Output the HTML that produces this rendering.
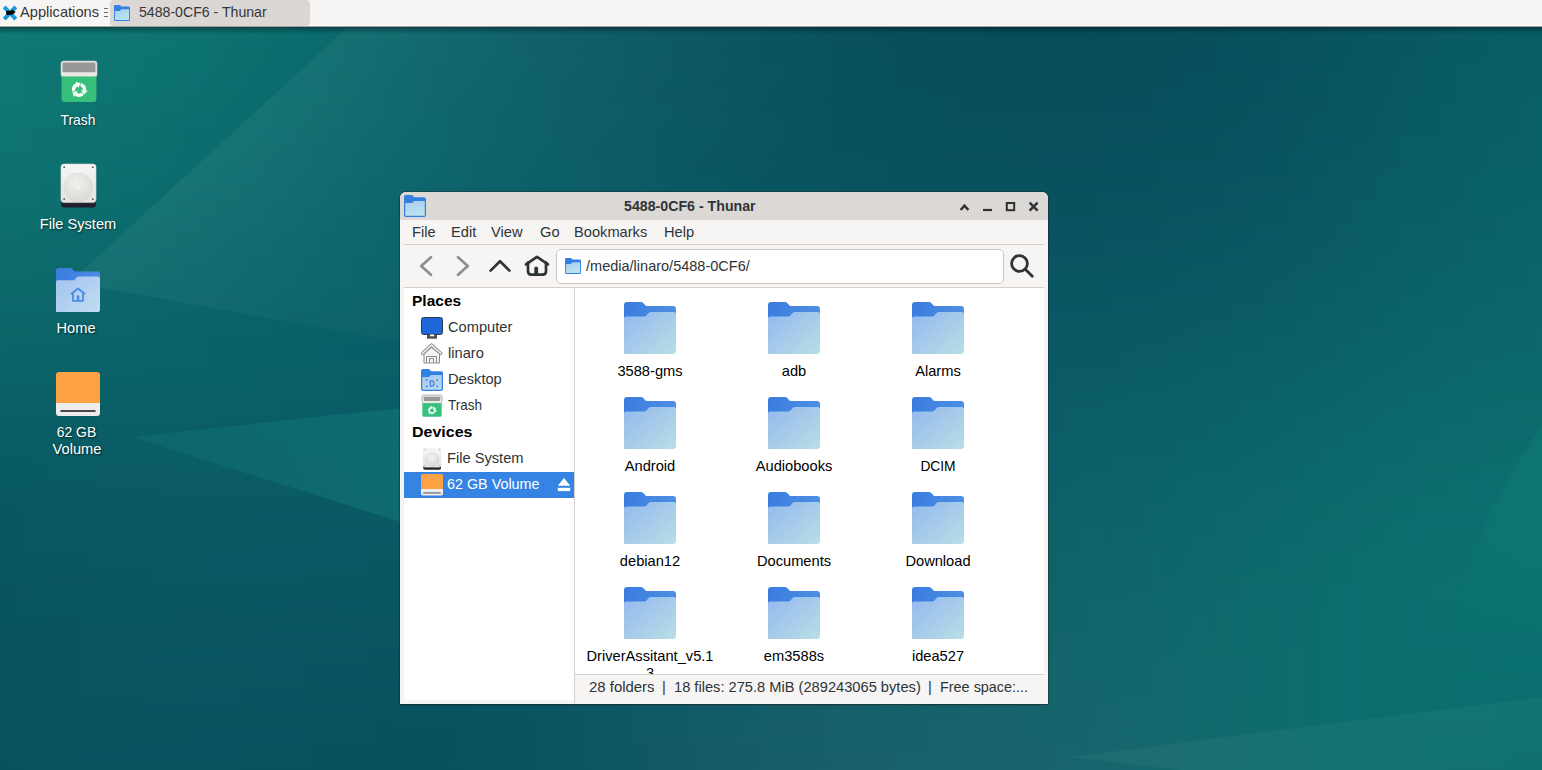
<!DOCTYPE html>
<html><head><meta charset="utf-8"><title>Thunar</title>
<style>
html,body{margin:0;padding:0;width:1542px;height:770px;overflow:hidden;}
body{position:relative;font-family:"Liberation Sans",sans-serif;background:#0b5e66;}
.t{position:absolute;white-space:nowrap;}
.a{position:absolute;}
svg{position:absolute;overflow:visible;}
</style></head><body>
<svg class="a" style="left:0;top:0" width="1542" height="770" viewBox="0 0 1542 770"><defs><linearGradient id="r0" x1="0" y1="0" x2="1" y2="0"><stop offset="0.0000" stop-color="#0f7873"/><stop offset="0.0415" stop-color="#0f7773"/><stop offset="0.0830" stop-color="#0e7672"/><stop offset="0.1245" stop-color="#0d7471"/><stop offset="0.1660" stop-color="#0c716f"/><stop offset="0.2075" stop-color="#0a6c6d"/><stop offset="0.2490" stop-color="#09666a"/><stop offset="0.2905" stop-color="#086167"/><stop offset="0.3320" stop-color="#085c65"/><stop offset="0.3735" stop-color="#075963"/><stop offset="0.4150" stop-color="#075662"/><stop offset="0.4565" stop-color="#075460"/><stop offset="0.4981" stop-color="#07515e"/><stop offset="0.5396" stop-color="#064f5d"/><stop offset="0.5811" stop-color="#064e5b"/><stop offset="0.6226" stop-color="#064c5a"/><stop offset="0.6641" stop-color="#064c5a"/><stop offset="0.7056" stop-color="#064c5a"/><stop offset="0.7471" stop-color="#064c5b"/><stop offset="0.7886" stop-color="#064e5d"/><stop offset="0.8301" stop-color="#07515e"/><stop offset="0.8716" stop-color="#075460"/><stop offset="0.9131" stop-color="#075762"/><stop offset="0.9546" stop-color="#085a63"/><stop offset="0.9961" stop-color="#085c64"/></linearGradient><linearGradient id="r1" x1="0" y1="0" x2="1" y2="0"><stop offset="0.0000" stop-color="#0f7873"/><stop offset="0.0415" stop-color="#0f7773"/><stop offset="0.0830" stop-color="#0e7672"/><stop offset="0.1245" stop-color="#0d7471"/><stop offset="0.1660" stop-color="#0c706f"/><stop offset="0.2075" stop-color="#0a6c6d"/><stop offset="0.2490" stop-color="#09666a"/><stop offset="0.2905" stop-color="#086167"/><stop offset="0.3320" stop-color="#085c65"/><stop offset="0.3735" stop-color="#085963"/><stop offset="0.4150" stop-color="#075662"/><stop offset="0.4565" stop-color="#075460"/><stop offset="0.4981" stop-color="#07525e"/><stop offset="0.5396" stop-color="#06505d"/><stop offset="0.5811" stop-color="#064e5b"/><stop offset="0.6226" stop-color="#064d5a"/><stop offset="0.6641" stop-color="#064c5a"/><stop offset="0.7056" stop-color="#064c5a"/><stop offset="0.7471" stop-color="#064c5b"/><stop offset="0.7886" stop-color="#064e5d"/><stop offset="0.8301" stop-color="#07515f"/><stop offset="0.8716" stop-color="#075460"/><stop offset="0.9131" stop-color="#075862"/><stop offset="0.9546" stop-color="#085a64"/><stop offset="0.9961" stop-color="#085c65"/></linearGradient><linearGradient id="r2" x1="0" y1="0" x2="1" y2="0"><stop offset="0.0000" stop-color="#0f7873"/><stop offset="0.0415" stop-color="#0f7773"/><stop offset="0.0830" stop-color="#0e7672"/><stop offset="0.1245" stop-color="#0d7471"/><stop offset="0.1660" stop-color="#0c706f"/><stop offset="0.2075" stop-color="#0a6b6d"/><stop offset="0.2490" stop-color="#09666a"/><stop offset="0.2905" stop-color="#086167"/><stop offset="0.3320" stop-color="#085d65"/><stop offset="0.3735" stop-color="#085963"/><stop offset="0.4150" stop-color="#075662"/><stop offset="0.4565" stop-color="#075460"/><stop offset="0.4981" stop-color="#07525f"/><stop offset="0.5396" stop-color="#06505d"/><stop offset="0.5811" stop-color="#064e5b"/><stop offset="0.6226" stop-color="#064d5a"/><stop offset="0.6641" stop-color="#064c5a"/><stop offset="0.7056" stop-color="#064c5b"/><stop offset="0.7471" stop-color="#064d5c"/><stop offset="0.7886" stop-color="#064e5d"/><stop offset="0.8301" stop-color="#07515f"/><stop offset="0.8716" stop-color="#075461"/><stop offset="0.9131" stop-color="#085862"/><stop offset="0.9546" stop-color="#085b64"/><stop offset="0.9961" stop-color="#085d65"/></linearGradient><linearGradient id="r3" x1="0" y1="0" x2="1" y2="0"><stop offset="0.0000" stop-color="#0f7873"/><stop offset="0.0415" stop-color="#0f7772"/><stop offset="0.0830" stop-color="#0e7672"/><stop offset="0.1245" stop-color="#0d7371"/><stop offset="0.1660" stop-color="#0b706f"/><stop offset="0.2075" stop-color="#0a6b6d"/><stop offset="0.2490" stop-color="#09666a"/><stop offset="0.2905" stop-color="#086167"/><stop offset="0.3320" stop-color="#085d65"/><stop offset="0.3735" stop-color="#085963"/><stop offset="0.4150" stop-color="#075762"/><stop offset="0.4565" stop-color="#075460"/><stop offset="0.4981" stop-color="#07525f"/><stop offset="0.5396" stop-color="#06505d"/><stop offset="0.5811" stop-color="#064e5b"/><stop offset="0.6226" stop-color="#064d5a"/><stop offset="0.6641" stop-color="#074c5a"/><stop offset="0.7056" stop-color="#074c5b"/><stop offset="0.7471" stop-color="#074d5c"/><stop offset="0.7886" stop-color="#074e5d"/><stop offset="0.8301" stop-color="#07515f"/><stop offset="0.8716" stop-color="#075561"/><stop offset="0.9131" stop-color="#085862"/><stop offset="0.9546" stop-color="#085b64"/><stop offset="0.9961" stop-color="#085d65"/></linearGradient><linearGradient id="r4" x1="0" y1="0" x2="1" y2="0"><stop offset="0.0000" stop-color="#0f7873"/><stop offset="0.0415" stop-color="#0e7772"/><stop offset="0.0830" stop-color="#0e7572"/><stop offset="0.1245" stop-color="#0d7370"/><stop offset="0.1660" stop-color="#0b706f"/><stop offset="0.2075" stop-color="#0a6b6c"/><stop offset="0.2490" stop-color="#09666a"/><stop offset="0.2905" stop-color="#086167"/><stop offset="0.3320" stop-color="#085d65"/><stop offset="0.3735" stop-color="#085964"/><stop offset="0.4150" stop-color="#075762"/><stop offset="0.4565" stop-color="#075460"/><stop offset="0.4981" stop-color="#07525f"/><stop offset="0.5396" stop-color="#07505d"/><stop offset="0.5811" stop-color="#064e5c"/><stop offset="0.6226" stop-color="#074d5b"/><stop offset="0.6641" stop-color="#074c5a"/><stop offset="0.7056" stop-color="#074c5b"/><stop offset="0.7471" stop-color="#074d5c"/><stop offset="0.7886" stop-color="#074f5d"/><stop offset="0.8301" stop-color="#07515f"/><stop offset="0.8716" stop-color="#075561"/><stop offset="0.9131" stop-color="#085862"/><stop offset="0.9546" stop-color="#085b64"/><stop offset="0.9961" stop-color="#085d65"/></linearGradient><linearGradient id="r5" x1="0" y1="0" x2="1" y2="0"><stop offset="0.0000" stop-color="#0f7773"/><stop offset="0.0415" stop-color="#0e7772"/><stop offset="0.0830" stop-color="#0e7572"/><stop offset="0.1245" stop-color="#0d7370"/><stop offset="0.1660" stop-color="#0b6f6f"/><stop offset="0.2075" stop-color="#0a6b6c"/><stop offset="0.2490" stop-color="#08656a"/><stop offset="0.2905" stop-color="#086167"/><stop offset="0.3320" stop-color="#085d65"/><stop offset="0.3735" stop-color="#085964"/><stop offset="0.4150" stop-color="#075762"/><stop offset="0.4565" stop-color="#075461"/><stop offset="0.4981" stop-color="#07525f"/><stop offset="0.5396" stop-color="#07505d"/><stop offset="0.5811" stop-color="#074e5c"/><stop offset="0.6226" stop-color="#074d5b"/><stop offset="0.6641" stop-color="#074c5b"/><stop offset="0.7056" stop-color="#074c5b"/><stop offset="0.7471" stop-color="#074d5c"/><stop offset="0.7886" stop-color="#074f5d"/><stop offset="0.8301" stop-color="#07525f"/><stop offset="0.8716" stop-color="#075561"/><stop offset="0.9131" stop-color="#085863"/><stop offset="0.9546" stop-color="#085b64"/><stop offset="0.9961" stop-color="#085d65"/></linearGradient><linearGradient id="r6" x1="0" y1="0" x2="1" y2="0"><stop offset="0.0000" stop-color="#0f7773"/><stop offset="0.0415" stop-color="#0e7672"/><stop offset="0.0830" stop-color="#0e7571"/><stop offset="0.1245" stop-color="#0c7270"/><stop offset="0.1660" stop-color="#0b6f6e"/><stop offset="0.2075" stop-color="#0a6a6c"/><stop offset="0.2490" stop-color="#08656a"/><stop offset="0.2905" stop-color="#086167"/><stop offset="0.3320" stop-color="#085d65"/><stop offset="0.3735" stop-color="#085964"/><stop offset="0.4150" stop-color="#075762"/><stop offset="0.4565" stop-color="#075461"/><stop offset="0.4981" stop-color="#07525f"/><stop offset="0.5396" stop-color="#07505d"/><stop offset="0.5811" stop-color="#074f5c"/><stop offset="0.6226" stop-color="#074d5b"/><stop offset="0.6641" stop-color="#074d5b"/><stop offset="0.7056" stop-color="#074d5b"/><stop offset="0.7471" stop-color="#074d5c"/><stop offset="0.7886" stop-color="#074f5e"/><stop offset="0.8301" stop-color="#07525f"/><stop offset="0.8716" stop-color="#075561"/><stop offset="0.9131" stop-color="#085863"/><stop offset="0.9546" stop-color="#085b64"/><stop offset="0.9961" stop-color="#085d65"/></linearGradient><linearGradient id="r7" x1="0" y1="0" x2="1" y2="0"><stop offset="0.0000" stop-color="#0f7772"/><stop offset="0.0415" stop-color="#0e7672"/><stop offset="0.0830" stop-color="#0e7471"/><stop offset="0.1245" stop-color="#0c7270"/><stop offset="0.1660" stop-color="#0b6f6e"/><stop offset="0.2075" stop-color="#096a6c"/><stop offset="0.2490" stop-color="#08656a"/><stop offset="0.2905" stop-color="#086167"/><stop offset="0.3320" stop-color="#085d65"/><stop offset="0.3735" stop-color="#085a64"/><stop offset="0.4150" stop-color="#085762"/><stop offset="0.4565" stop-color="#075561"/><stop offset="0.4981" stop-color="#07525f"/><stop offset="0.5396" stop-color="#07505e"/><stop offset="0.5811" stop-color="#074f5c"/><stop offset="0.6226" stop-color="#074e5b"/><stop offset="0.6641" stop-color="#074d5b"/><stop offset="0.7056" stop-color="#074d5c"/><stop offset="0.7471" stop-color="#074e5d"/><stop offset="0.7886" stop-color="#074f5e"/><stop offset="0.8301" stop-color="#07525f"/><stop offset="0.8716" stop-color="#075561"/><stop offset="0.9131" stop-color="#085963"/><stop offset="0.9546" stop-color="#085b64"/><stop offset="0.9961" stop-color="#095e65"/></linearGradient><linearGradient id="r8" x1="0" y1="0" x2="1" y2="0"><stop offset="0.0000" stop-color="#0f7772"/><stop offset="0.0415" stop-color="#0e7672"/><stop offset="0.0830" stop-color="#0d7471"/><stop offset="0.1245" stop-color="#0c7270"/><stop offset="0.1660" stop-color="#0b6e6e"/><stop offset="0.2075" stop-color="#096a6c"/><stop offset="0.2490" stop-color="#08656a"/><stop offset="0.2905" stop-color="#086067"/><stop offset="0.3320" stop-color="#085d65"/><stop offset="0.3735" stop-color="#085a64"/><stop offset="0.4150" stop-color="#085762"/><stop offset="0.4565" stop-color="#075561"/><stop offset="0.4981" stop-color="#07535f"/><stop offset="0.5396" stop-color="#07515e"/><stop offset="0.5811" stop-color="#074f5c"/><stop offset="0.6226" stop-color="#074e5b"/><stop offset="0.6641" stop-color="#074d5b"/><stop offset="0.7056" stop-color="#074d5c"/><stop offset="0.7471" stop-color="#074e5d"/><stop offset="0.7886" stop-color="#074f5e"/><stop offset="0.8301" stop-color="#075260"/><stop offset="0.8716" stop-color="#075561"/><stop offset="0.9131" stop-color="#085963"/><stop offset="0.9546" stop-color="#085c64"/><stop offset="0.9961" stop-color="#095e65"/></linearGradient><linearGradient id="r9" x1="0" y1="0" x2="1" y2="0"><stop offset="0.0000" stop-color="#0f7772"/><stop offset="0.0415" stop-color="#0e7672"/><stop offset="0.0830" stop-color="#0d7471"/><stop offset="0.1245" stop-color="#0c7170"/><stop offset="0.1660" stop-color="#0b6e6e"/><stop offset="0.2075" stop-color="#09696c"/><stop offset="0.2490" stop-color="#086569"/><stop offset="0.2905" stop-color="#086067"/><stop offset="0.3320" stop-color="#085d65"/><stop offset="0.3735" stop-color="#085a64"/><stop offset="0.4150" stop-color="#085762"/><stop offset="0.4565" stop-color="#075561"/><stop offset="0.4981" stop-color="#07535f"/><stop offset="0.5396" stop-color="#07515e"/><stop offset="0.5811" stop-color="#074f5c"/><stop offset="0.6226" stop-color="#074e5c"/><stop offset="0.6641" stop-color="#074d5b"/><stop offset="0.7056" stop-color="#074d5c"/><stop offset="0.7471" stop-color="#074e5d"/><stop offset="0.7886" stop-color="#07505e"/><stop offset="0.8301" stop-color="#075260"/><stop offset="0.8716" stop-color="#085661"/><stop offset="0.9131" stop-color="#085963"/><stop offset="0.9546" stop-color="#085c64"/><stop offset="0.9961" stop-color="#095e65"/></linearGradient><linearGradient id="r10" x1="0" y1="0" x2="1" y2="0"><stop offset="0.0000" stop-color="#0f7672"/><stop offset="0.0415" stop-color="#0e7572"/><stop offset="0.0830" stop-color="#0d7471"/><stop offset="0.1245" stop-color="#0c7170"/><stop offset="0.1660" stop-color="#0b6d6e"/><stop offset="0.2075" stop-color="#09696c"/><stop offset="0.2490" stop-color="#086569"/><stop offset="0.2905" stop-color="#086067"/><stop offset="0.3320" stop-color="#085d65"/><stop offset="0.3735" stop-color="#085a64"/><stop offset="0.4150" stop-color="#085762"/><stop offset="0.4565" stop-color="#075561"/><stop offset="0.4981" stop-color="#07535f"/><stop offset="0.5396" stop-color="#07515e"/><stop offset="0.5811" stop-color="#074f5d"/><stop offset="0.6226" stop-color="#074e5c"/><stop offset="0.6641" stop-color="#074e5c"/><stop offset="0.7056" stop-color="#074e5c"/><stop offset="0.7471" stop-color="#074e5d"/><stop offset="0.7886" stop-color="#07505e"/><stop offset="0.8301" stop-color="#075360"/><stop offset="0.8716" stop-color="#085662"/><stop offset="0.9131" stop-color="#085963"/><stop offset="0.9546" stop-color="#085c64"/><stop offset="0.9961" stop-color="#095e65"/></linearGradient><linearGradient id="r11" x1="0" y1="0" x2="1" y2="0"><stop offset="0.0000" stop-color="#0f7672"/><stop offset="0.0415" stop-color="#0e7571"/><stop offset="0.0830" stop-color="#0d7371"/><stop offset="0.1245" stop-color="#0c716f"/><stop offset="0.1660" stop-color="#0a6d6e"/><stop offset="0.2075" stop-color="#09696c"/><stop offset="0.2490" stop-color="#086469"/><stop offset="0.2905" stop-color="#086067"/><stop offset="0.3320" stop-color="#075d65"/><stop offset="0.3735" stop-color="#085a64"/><stop offset="0.4150" stop-color="#085763"/><stop offset="0.4565" stop-color="#085561"/><stop offset="0.4981" stop-color="#075360"/><stop offset="0.5396" stop-color="#07515e"/><stop offset="0.5811" stop-color="#07505d"/><stop offset="0.6226" stop-color="#074e5c"/><stop offset="0.6641" stop-color="#074e5c"/><stop offset="0.7056" stop-color="#074e5c"/><stop offset="0.7471" stop-color="#074f5d"/><stop offset="0.7886" stop-color="#07505f"/><stop offset="0.8301" stop-color="#075360"/><stop offset="0.8716" stop-color="#085662"/><stop offset="0.9131" stop-color="#085963"/><stop offset="0.9546" stop-color="#085c64"/><stop offset="0.9961" stop-color="#095e65"/></linearGradient><linearGradient id="r12" x1="0" y1="0" x2="1" y2="0"><stop offset="0.0000" stop-color="#0f7672"/><stop offset="0.0415" stop-color="#0e7571"/><stop offset="0.0830" stop-color="#0d7370"/><stop offset="0.1245" stop-color="#0c706f"/><stop offset="0.1660" stop-color="#0a6d6d"/><stop offset="0.2075" stop-color="#09696b"/><stop offset="0.2490" stop-color="#086469"/><stop offset="0.2905" stop-color="#076067"/><stop offset="0.3320" stop-color="#075d65"/><stop offset="0.3735" stop-color="#085a64"/><stop offset="0.4150" stop-color="#085763"/><stop offset="0.4565" stop-color="#085561"/><stop offset="0.4981" stop-color="#075360"/><stop offset="0.5396" stop-color="#07515e"/><stop offset="0.5811" stop-color="#07505d"/><stop offset="0.6226" stop-color="#074f5c"/><stop offset="0.6641" stop-color="#074e5c"/><stop offset="0.7056" stop-color="#074e5d"/><stop offset="0.7471" stop-color="#074f5e"/><stop offset="0.7886" stop-color="#07505f"/><stop offset="0.8301" stop-color="#085360"/><stop offset="0.8716" stop-color="#085662"/><stop offset="0.9131" stop-color="#085a63"/><stop offset="0.9546" stop-color="#085c65"/><stop offset="0.9961" stop-color="#095f66"/></linearGradient><linearGradient id="r13" x1="0" y1="0" x2="1" y2="0"><stop offset="0.0000" stop-color="#0f7572"/><stop offset="0.0415" stop-color="#0e7471"/><stop offset="0.0830" stop-color="#0d7270"/><stop offset="0.1245" stop-color="#0c706f"/><stop offset="0.1660" stop-color="#0a6c6d"/><stop offset="0.2075" stop-color="#09686b"/><stop offset="0.2490" stop-color="#086469"/><stop offset="0.2905" stop-color="#076067"/><stop offset="0.3320" stop-color="#075d66"/><stop offset="0.3735" stop-color="#085a64"/><stop offset="0.4150" stop-color="#085863"/><stop offset="0.4565" stop-color="#085561"/><stop offset="0.4981" stop-color="#075360"/><stop offset="0.5396" stop-color="#07525e"/><stop offset="0.5811" stop-color="#07505d"/><stop offset="0.6226" stop-color="#074f5d"/><stop offset="0.6641" stop-color="#074e5c"/><stop offset="0.7056" stop-color="#074e5d"/><stop offset="0.7471" stop-color="#074f5e"/><stop offset="0.7886" stop-color="#07515f"/><stop offset="0.8301" stop-color="#085360"/><stop offset="0.8716" stop-color="#085662"/><stop offset="0.9131" stop-color="#085a63"/><stop offset="0.9546" stop-color="#095d65"/><stop offset="0.9961" stop-color="#095f66"/></linearGradient><linearGradient id="r14" x1="0" y1="0" x2="1" y2="0"><stop offset="0.0000" stop-color="#0f7571"/><stop offset="0.0415" stop-color="#0e7471"/><stop offset="0.0830" stop-color="#0d7270"/><stop offset="0.1245" stop-color="#0c6f6f"/><stop offset="0.1660" stop-color="#0a6c6d"/><stop offset="0.2075" stop-color="#09686b"/><stop offset="0.2490" stop-color="#086469"/><stop offset="0.2905" stop-color="#076067"/><stop offset="0.3320" stop-color="#075d66"/><stop offset="0.3735" stop-color="#085a64"/><stop offset="0.4150" stop-color="#085863"/><stop offset="0.4565" stop-color="#085661"/><stop offset="0.4981" stop-color="#075460"/><stop offset="0.5396" stop-color="#07525f"/><stop offset="0.5811" stop-color="#07505d"/><stop offset="0.6226" stop-color="#074f5d"/><stop offset="0.6641" stop-color="#074f5d"/><stop offset="0.7056" stop-color="#074f5d"/><stop offset="0.7471" stop-color="#074f5e"/><stop offset="0.7886" stop-color="#08515f"/><stop offset="0.8301" stop-color="#085361"/><stop offset="0.8716" stop-color="#085762"/><stop offset="0.9131" stop-color="#085a64"/><stop offset="0.9546" stop-color="#095d65"/><stop offset="0.9961" stop-color="#095f66"/></linearGradient><linearGradient id="r15" x1="0" y1="0" x2="1" y2="0"><stop offset="0.0000" stop-color="#0f7571"/><stop offset="0.0415" stop-color="#0e7471"/><stop offset="0.0830" stop-color="#0d7270"/><stop offset="0.1245" stop-color="#0b6f6f"/><stop offset="0.1660" stop-color="#0a6c6d"/><stop offset="0.2075" stop-color="#09686b"/><stop offset="0.2490" stop-color="#086469"/><stop offset="0.2905" stop-color="#076067"/><stop offset="0.3320" stop-color="#075d66"/><stop offset="0.3735" stop-color="#085a64"/><stop offset="0.4150" stop-color="#085863"/><stop offset="0.4565" stop-color="#085661"/><stop offset="0.4981" stop-color="#085460"/><stop offset="0.5396" stop-color="#07525f"/><stop offset="0.5811" stop-color="#07505e"/><stop offset="0.6226" stop-color="#074f5d"/><stop offset="0.6641" stop-color="#074f5d"/><stop offset="0.7056" stop-color="#074f5d"/><stop offset="0.7471" stop-color="#08505e"/><stop offset="0.7886" stop-color="#08515f"/><stop offset="0.8301" stop-color="#085461"/><stop offset="0.8716" stop-color="#085762"/><stop offset="0.9131" stop-color="#085a64"/><stop offset="0.9546" stop-color="#095d65"/><stop offset="0.9961" stop-color="#095f66"/></linearGradient><linearGradient id="r16" x1="0" y1="0" x2="1" y2="0"><stop offset="0.0000" stop-color="#0e7471"/><stop offset="0.0415" stop-color="#0e7370"/><stop offset="0.0830" stop-color="#0d7170"/><stop offset="0.1245" stop-color="#0b6e6e"/><stop offset="0.1660" stop-color="#0a6b6d"/><stop offset="0.2075" stop-color="#09676b"/><stop offset="0.2490" stop-color="#086369"/><stop offset="0.2905" stop-color="#076067"/><stop offset="0.3320" stop-color="#075d66"/><stop offset="0.3735" stop-color="#085a64"/><stop offset="0.4150" stop-color="#085863"/><stop offset="0.4565" stop-color="#085662"/><stop offset="0.4981" stop-color="#085460"/><stop offset="0.5396" stop-color="#07525f"/><stop offset="0.5811" stop-color="#07515e"/><stop offset="0.6226" stop-color="#07505d"/><stop offset="0.6641" stop-color="#074f5d"/><stop offset="0.7056" stop-color="#084f5e"/><stop offset="0.7471" stop-color="#08505f"/><stop offset="0.7886" stop-color="#085160"/><stop offset="0.8301" stop-color="#085461"/><stop offset="0.8716" stop-color="#085762"/><stop offset="0.9131" stop-color="#085a64"/><stop offset="0.9546" stop-color="#095d65"/><stop offset="0.9961" stop-color="#095f66"/></linearGradient><linearGradient id="r17" x1="0" y1="0" x2="1" y2="0"><stop offset="0.0000" stop-color="#0e7471"/><stop offset="0.0415" stop-color="#0e7370"/><stop offset="0.0830" stop-color="#0d716f"/><stop offset="0.1245" stop-color="#0b6e6e"/><stop offset="0.1660" stop-color="#0a6b6d"/><stop offset="0.2075" stop-color="#09676b"/><stop offset="0.2490" stop-color="#086369"/><stop offset="0.2905" stop-color="#076067"/><stop offset="0.3320" stop-color="#075d66"/><stop offset="0.3735" stop-color="#085a64"/><stop offset="0.4150" stop-color="#085863"/><stop offset="0.4565" stop-color="#085662"/><stop offset="0.4981" stop-color="#085460"/><stop offset="0.5396" stop-color="#08525f"/><stop offset="0.5811" stop-color="#07515e"/><stop offset="0.6226" stop-color="#07505d"/><stop offset="0.6641" stop-color="#074f5d"/><stop offset="0.7056" stop-color="#084f5e"/><stop offset="0.7471" stop-color="#08505f"/><stop offset="0.7886" stop-color="#085260"/><stop offset="0.8301" stop-color="#085461"/><stop offset="0.8716" stop-color="#085763"/><stop offset="0.9131" stop-color="#095b64"/><stop offset="0.9546" stop-color="#095d65"/><stop offset="0.9961" stop-color="#096066"/></linearGradient><linearGradient id="r18" x1="0" y1="0" x2="1" y2="0"><stop offset="0.0000" stop-color="#0e7471"/><stop offset="0.0415" stop-color="#0e7270"/><stop offset="0.0830" stop-color="#0c706f"/><stop offset="0.1245" stop-color="#0b6e6e"/><stop offset="0.1660" stop-color="#0a6a6c"/><stop offset="0.2075" stop-color="#08676b"/><stop offset="0.2490" stop-color="#086369"/><stop offset="0.2905" stop-color="#076067"/><stop offset="0.3320" stop-color="#075d66"/><stop offset="0.3735" stop-color="#085a64"/><stop offset="0.4150" stop-color="#085863"/><stop offset="0.4565" stop-color="#085662"/><stop offset="0.4981" stop-color="#085460"/><stop offset="0.5396" stop-color="#08525f"/><stop offset="0.5811" stop-color="#07515e"/><stop offset="0.6226" stop-color="#07505e"/><stop offset="0.6641" stop-color="#08505e"/><stop offset="0.7056" stop-color="#08505e"/><stop offset="0.7471" stop-color="#08515f"/><stop offset="0.7886" stop-color="#085260"/><stop offset="0.8301" stop-color="#085461"/><stop offset="0.8716" stop-color="#085863"/><stop offset="0.9131" stop-color="#095b64"/><stop offset="0.9546" stop-color="#095e65"/><stop offset="0.9961" stop-color="#096066"/></linearGradient><linearGradient id="r19" x1="0" y1="0" x2="1" y2="0"><stop offset="0.0000" stop-color="#0e7370"/><stop offset="0.0415" stop-color="#0d7270"/><stop offset="0.0830" stop-color="#0c706f"/><stop offset="0.1245" stop-color="#0b6d6e"/><stop offset="0.1660" stop-color="#0a6a6c"/><stop offset="0.2075" stop-color="#08666b"/><stop offset="0.2490" stop-color="#086369"/><stop offset="0.2905" stop-color="#076067"/><stop offset="0.3320" stop-color="#075d66"/><stop offset="0.3735" stop-color="#085a64"/><stop offset="0.4150" stop-color="#085863"/><stop offset="0.4565" stop-color="#085662"/><stop offset="0.4981" stop-color="#085461"/><stop offset="0.5396" stop-color="#08535f"/><stop offset="0.5811" stop-color="#08515e"/><stop offset="0.6226" stop-color="#08505e"/><stop offset="0.6641" stop-color="#08505e"/><stop offset="0.7056" stop-color="#08505f"/><stop offset="0.7471" stop-color="#08515f"/><stop offset="0.7886" stop-color="#085260"/><stop offset="0.8301" stop-color="#085562"/><stop offset="0.8716" stop-color="#085863"/><stop offset="0.9131" stop-color="#095b64"/><stop offset="0.9546" stop-color="#095e65"/><stop offset="0.9961" stop-color="#096066"/></linearGradient><linearGradient id="r20" x1="0" y1="0" x2="1" y2="0"><stop offset="0.0000" stop-color="#0e7370"/><stop offset="0.0415" stop-color="#0d7170"/><stop offset="0.0830" stop-color="#0c6f6f"/><stop offset="0.1245" stop-color="#0b6d6d"/><stop offset="0.1660" stop-color="#0a696c"/><stop offset="0.2075" stop-color="#08666a"/><stop offset="0.2490" stop-color="#086369"/><stop offset="0.2905" stop-color="#076067"/><stop offset="0.3320" stop-color="#075d66"/><stop offset="0.3735" stop-color="#085b64"/><stop offset="0.4150" stop-color="#085863"/><stop offset="0.4565" stop-color="#085662"/><stop offset="0.4981" stop-color="#085561"/><stop offset="0.5396" stop-color="#085360"/><stop offset="0.5811" stop-color="#08525f"/><stop offset="0.6226" stop-color="#08515e"/><stop offset="0.6641" stop-color="#08505e"/><stop offset="0.7056" stop-color="#08505f"/><stop offset="0.7471" stop-color="#085160"/><stop offset="0.7886" stop-color="#085361"/><stop offset="0.8301" stop-color="#085562"/><stop offset="0.8716" stop-color="#095863"/><stop offset="0.9131" stop-color="#095b64"/><stop offset="0.9546" stop-color="#095e65"/><stop offset="0.9961" stop-color="#096066"/></linearGradient><linearGradient id="r21" x1="0" y1="0" x2="1" y2="0"><stop offset="0.0000" stop-color="#0e7270"/><stop offset="0.0415" stop-color="#0d716f"/><stop offset="0.0830" stop-color="#0c6f6e"/><stop offset="0.1245" stop-color="#0b6c6d"/><stop offset="0.1660" stop-color="#09696c"/><stop offset="0.2075" stop-color="#08666a"/><stop offset="0.2490" stop-color="#076369"/><stop offset="0.2905" stop-color="#076067"/><stop offset="0.3320" stop-color="#075d66"/><stop offset="0.3735" stop-color="#085b65"/><stop offset="0.4150" stop-color="#085863"/><stop offset="0.4565" stop-color="#085662"/><stop offset="0.4981" stop-color="#085561"/><stop offset="0.5396" stop-color="#085360"/><stop offset="0.5811" stop-color="#08525f"/><stop offset="0.6226" stop-color="#08515e"/><stop offset="0.6641" stop-color="#08515f"/><stop offset="0.7056" stop-color="#08515f"/><stop offset="0.7471" stop-color="#085160"/><stop offset="0.7886" stop-color="#085361"/><stop offset="0.8301" stop-color="#085562"/><stop offset="0.8716" stop-color="#095863"/><stop offset="0.9131" stop-color="#095c64"/><stop offset="0.9546" stop-color="#095e66"/><stop offset="0.9961" stop-color="#096166"/></linearGradient><linearGradient id="r22" x1="0" y1="0" x2="1" y2="0"><stop offset="0.0000" stop-color="#0e7270"/><stop offset="0.0415" stop-color="#0d706f"/><stop offset="0.0830" stop-color="#0c6e6e"/><stop offset="0.1245" stop-color="#0b6c6d"/><stop offset="0.1660" stop-color="#09696c"/><stop offset="0.2075" stop-color="#08656a"/><stop offset="0.2490" stop-color="#076269"/><stop offset="0.2905" stop-color="#076067"/><stop offset="0.3320" stop-color="#075d66"/><stop offset="0.3735" stop-color="#085b65"/><stop offset="0.4150" stop-color="#085963"/><stop offset="0.4565" stop-color="#085762"/><stop offset="0.4981" stop-color="#085561"/><stop offset="0.5396" stop-color="#085360"/><stop offset="0.5811" stop-color="#08525f"/><stop offset="0.6226" stop-color="#08515f"/><stop offset="0.6641" stop-color="#08515f"/><stop offset="0.7056" stop-color="#08515f"/><stop offset="0.7471" stop-color="#085260"/><stop offset="0.7886" stop-color="#085361"/><stop offset="0.8301" stop-color="#095662"/><stop offset="0.8716" stop-color="#095963"/><stop offset="0.9131" stop-color="#095c65"/><stop offset="0.9546" stop-color="#095f66"/><stop offset="0.9961" stop-color="#096166"/></linearGradient><linearGradient id="r23" x1="0" y1="0" x2="1" y2="0"><stop offset="0.0000" stop-color="#0e716f"/><stop offset="0.0415" stop-color="#0d706f"/><stop offset="0.0830" stop-color="#0c6e6e"/><stop offset="0.1245" stop-color="#0b6b6d"/><stop offset="0.1660" stop-color="#09686b"/><stop offset="0.2075" stop-color="#08656a"/><stop offset="0.2490" stop-color="#076269"/><stop offset="0.2905" stop-color="#075f67"/><stop offset="0.3320" stop-color="#075d66"/><stop offset="0.3735" stop-color="#085b65"/><stop offset="0.4150" stop-color="#085963"/><stop offset="0.4565" stop-color="#085762"/><stop offset="0.4981" stop-color="#085561"/><stop offset="0.5396" stop-color="#085460"/><stop offset="0.5811" stop-color="#08525f"/><stop offset="0.6226" stop-color="#08525f"/><stop offset="0.6641" stop-color="#08515f"/><stop offset="0.7056" stop-color="#085160"/><stop offset="0.7471" stop-color="#085260"/><stop offset="0.7886" stop-color="#095461"/><stop offset="0.8301" stop-color="#095662"/><stop offset="0.8716" stop-color="#095964"/><stop offset="0.9131" stop-color="#095c65"/><stop offset="0.9546" stop-color="#095f66"/><stop offset="0.9961" stop-color="#096167"/></linearGradient><linearGradient id="r24" x1="0" y1="0" x2="1" y2="0"><stop offset="0.0000" stop-color="#0e716f"/><stop offset="0.0415" stop-color="#0d6f6e"/><stop offset="0.0830" stop-color="#0c6d6e"/><stop offset="0.1245" stop-color="#0a6b6d"/><stop offset="0.1660" stop-color="#09686b"/><stop offset="0.2075" stop-color="#08656a"/><stop offset="0.2490" stop-color="#076269"/><stop offset="0.2905" stop-color="#075f67"/><stop offset="0.3320" stop-color="#075d66"/><stop offset="0.3735" stop-color="#085b65"/><stop offset="0.4150" stop-color="#085964"/><stop offset="0.4565" stop-color="#085762"/><stop offset="0.4981" stop-color="#085561"/><stop offset="0.5396" stop-color="#085460"/><stop offset="0.5811" stop-color="#085360"/><stop offset="0.6226" stop-color="#08525f"/><stop offset="0.6641" stop-color="#08525f"/><stop offset="0.7056" stop-color="#085260"/><stop offset="0.7471" stop-color="#085361"/><stop offset="0.7886" stop-color="#095462"/><stop offset="0.8301" stop-color="#095663"/><stop offset="0.8716" stop-color="#095964"/><stop offset="0.9131" stop-color="#095c65"/><stop offset="0.9546" stop-color="#095f66"/><stop offset="0.9961" stop-color="#096167"/></linearGradient><linearGradient id="r25" x1="0" y1="0" x2="1" y2="0"><stop offset="0.0000" stop-color="#0e706f"/><stop offset="0.0415" stop-color="#0d6f6e"/><stop offset="0.0830" stop-color="#0c6d6d"/><stop offset="0.1245" stop-color="#0a6a6c"/><stop offset="0.1660" stop-color="#09676b"/><stop offset="0.2075" stop-color="#08656a"/><stop offset="0.2490" stop-color="#076268"/><stop offset="0.2905" stop-color="#075f67"/><stop offset="0.3320" stop-color="#075d66"/><stop offset="0.3735" stop-color="#085b65"/><stop offset="0.4150" stop-color="#085964"/><stop offset="0.4565" stop-color="#085763"/><stop offset="0.4981" stop-color="#085561"/><stop offset="0.5396" stop-color="#085461"/><stop offset="0.5811" stop-color="#085360"/><stop offset="0.6226" stop-color="#085260"/><stop offset="0.6641" stop-color="#085260"/><stop offset="0.7056" stop-color="#085260"/><stop offset="0.7471" stop-color="#095361"/><stop offset="0.7886" stop-color="#095462"/><stop offset="0.8301" stop-color="#095763"/><stop offset="0.8716" stop-color="#095a64"/><stop offset="0.9131" stop-color="#095d65"/><stop offset="0.9546" stop-color="#095f66"/><stop offset="0.9961" stop-color="#0a6167"/></linearGradient><linearGradient id="r26" x1="0" y1="0" x2="1" y2="0"><stop offset="0.0000" stop-color="#0d706e"/><stop offset="0.0415" stop-color="#0d6e6e"/><stop offset="0.0830" stop-color="#0b6c6d"/><stop offset="0.1245" stop-color="#0a6a6c"/><stop offset="0.1660" stop-color="#09676b"/><stop offset="0.2075" stop-color="#08646a"/><stop offset="0.2490" stop-color="#076268"/><stop offset="0.2905" stop-color="#075f67"/><stop offset="0.3320" stop-color="#075d66"/><stop offset="0.3735" stop-color="#085b65"/><stop offset="0.4150" stop-color="#085964"/><stop offset="0.4565" stop-color="#085763"/><stop offset="0.4981" stop-color="#085662"/><stop offset="0.5396" stop-color="#085461"/><stop offset="0.5811" stop-color="#085360"/><stop offset="0.6226" stop-color="#085360"/><stop offset="0.6641" stop-color="#085260"/><stop offset="0.7056" stop-color="#085260"/><stop offset="0.7471" stop-color="#095361"/><stop offset="0.7886" stop-color="#095562"/><stop offset="0.8301" stop-color="#095763"/><stop offset="0.8716" stop-color="#095a64"/><stop offset="0.9131" stop-color="#095d65"/><stop offset="0.9546" stop-color="#096066"/><stop offset="0.9961" stop-color="#0a6267"/></linearGradient><linearGradient id="r27" x1="0" y1="0" x2="1" y2="0"><stop offset="0.0000" stop-color="#0d6f6e"/><stop offset="0.0415" stop-color="#0c6e6d"/><stop offset="0.0830" stop-color="#0b6c6d"/><stop offset="0.1245" stop-color="#0a696c"/><stop offset="0.1660" stop-color="#09676b"/><stop offset="0.2075" stop-color="#08646a"/><stop offset="0.2490" stop-color="#076168"/><stop offset="0.2905" stop-color="#075f67"/><stop offset="0.3320" stop-color="#075d66"/><stop offset="0.3735" stop-color="#085b65"/><stop offset="0.4150" stop-color="#085964"/><stop offset="0.4565" stop-color="#085763"/><stop offset="0.4981" stop-color="#085662"/><stop offset="0.5396" stop-color="#085461"/><stop offset="0.5811" stop-color="#085360"/><stop offset="0.6226" stop-color="#085360"/><stop offset="0.6641" stop-color="#085360"/><stop offset="0.7056" stop-color="#085361"/><stop offset="0.7471" stop-color="#095461"/><stop offset="0.7886" stop-color="#095562"/><stop offset="0.8301" stop-color="#095763"/><stop offset="0.8716" stop-color="#095a64"/><stop offset="0.9131" stop-color="#095d65"/><stop offset="0.9546" stop-color="#0a6066"/><stop offset="0.9961" stop-color="#0a6267"/></linearGradient><linearGradient id="r28" x1="0" y1="0" x2="1" y2="0"><stop offset="0.0000" stop-color="#0d6f6e"/><stop offset="0.0415" stop-color="#0c6d6d"/><stop offset="0.0830" stop-color="#0b6b6c"/><stop offset="0.1245" stop-color="#0a696c"/><stop offset="0.1660" stop-color="#09666b"/><stop offset="0.2075" stop-color="#086469"/><stop offset="0.2490" stop-color="#076168"/><stop offset="0.2905" stop-color="#075f67"/><stop offset="0.3320" stop-color="#075d66"/><stop offset="0.3735" stop-color="#085b65"/><stop offset="0.4150" stop-color="#085964"/><stop offset="0.4565" stop-color="#095763"/><stop offset="0.4981" stop-color="#095662"/><stop offset="0.5396" stop-color="#085561"/><stop offset="0.5811" stop-color="#085461"/><stop offset="0.6226" stop-color="#085360"/><stop offset="0.6641" stop-color="#085361"/><stop offset="0.7056" stop-color="#095361"/><stop offset="0.7471" stop-color="#095462"/><stop offset="0.7886" stop-color="#095663"/><stop offset="0.8301" stop-color="#095863"/><stop offset="0.8716" stop-color="#095b64"/><stop offset="0.9131" stop-color="#0a5e66"/><stop offset="0.9546" stop-color="#0a6066"/><stop offset="0.9961" stop-color="#0a6267"/></linearGradient><linearGradient id="r29" x1="0" y1="0" x2="1" y2="0"><stop offset="0.0000" stop-color="#0d6e6d"/><stop offset="0.0415" stop-color="#0c6c6d"/><stop offset="0.0830" stop-color="#0b6a6c"/><stop offset="0.1245" stop-color="#0a686b"/><stop offset="0.1660" stop-color="#09666a"/><stop offset="0.2075" stop-color="#086369"/><stop offset="0.2490" stop-color="#076168"/><stop offset="0.2905" stop-color="#075f67"/><stop offset="0.3320" stop-color="#075d66"/><stop offset="0.3735" stop-color="#085b65"/><stop offset="0.4150" stop-color="#085964"/><stop offset="0.4565" stop-color="#095863"/><stop offset="0.4981" stop-color="#095662"/><stop offset="0.5396" stop-color="#095561"/><stop offset="0.5811" stop-color="#085461"/><stop offset="0.6226" stop-color="#085361"/><stop offset="0.6641" stop-color="#085361"/><stop offset="0.7056" stop-color="#095461"/><stop offset="0.7471" stop-color="#095462"/><stop offset="0.7886" stop-color="#095663"/><stop offset="0.8301" stop-color="#095864"/><stop offset="0.8716" stop-color="#0a5b65"/><stop offset="0.9131" stop-color="#0a5e66"/><stop offset="0.9546" stop-color="#0a6067"/><stop offset="0.9961" stop-color="#0a6267"/></linearGradient><linearGradient id="r30" x1="0" y1="0" x2="1" y2="0"><stop offset="0.0000" stop-color="#0d6d6d"/><stop offset="0.0415" stop-color="#0c6c6c"/><stop offset="0.0830" stop-color="#0b6a6c"/><stop offset="0.1245" stop-color="#0a686b"/><stop offset="0.1660" stop-color="#09656a"/><stop offset="0.2075" stop-color="#086369"/><stop offset="0.2490" stop-color="#076168"/><stop offset="0.2905" stop-color="#075f67"/><stop offset="0.3320" stop-color="#085d66"/><stop offset="0.3735" stop-color="#085b65"/><stop offset="0.4150" stop-color="#085964"/><stop offset="0.4565" stop-color="#095863"/><stop offset="0.4981" stop-color="#095662"/><stop offset="0.5396" stop-color="#095562"/><stop offset="0.5811" stop-color="#085461"/><stop offset="0.6226" stop-color="#085461"/><stop offset="0.6641" stop-color="#085461"/><stop offset="0.7056" stop-color="#095462"/><stop offset="0.7471" stop-color="#095562"/><stop offset="0.7886" stop-color="#095663"/><stop offset="0.8301" stop-color="#095964"/><stop offset="0.8716" stop-color="#0a5b65"/><stop offset="0.9131" stop-color="#0a5e66"/><stop offset="0.9546" stop-color="#0a6167"/><stop offset="0.9961" stop-color="#0a6367"/></linearGradient><linearGradient id="r31" x1="0" y1="0" x2="1" y2="0"><stop offset="0.0000" stop-color="#0d6d6c"/><stop offset="0.0415" stop-color="#0c6b6c"/><stop offset="0.0830" stop-color="#0b696c"/><stop offset="0.1245" stop-color="#0a676b"/><stop offset="0.1660" stop-color="#09656a"/><stop offset="0.2075" stop-color="#086369"/><stop offset="0.2490" stop-color="#076168"/><stop offset="0.2905" stop-color="#075f67"/><stop offset="0.3320" stop-color="#085d66"/><stop offset="0.3735" stop-color="#085b65"/><stop offset="0.4150" stop-color="#095964"/><stop offset="0.4565" stop-color="#095863"/><stop offset="0.4981" stop-color="#095662"/><stop offset="0.5396" stop-color="#095562"/><stop offset="0.5811" stop-color="#095561"/><stop offset="0.6226" stop-color="#095461"/><stop offset="0.6641" stop-color="#095461"/><stop offset="0.7056" stop-color="#095462"/><stop offset="0.7471" stop-color="#095563"/><stop offset="0.7886" stop-color="#095763"/><stop offset="0.8301" stop-color="#0a5964"/><stop offset="0.8716" stop-color="#0a5c65"/><stop offset="0.9131" stop-color="#0a5e66"/><stop offset="0.9546" stop-color="#0a6167"/><stop offset="0.9961" stop-color="#0a6368"/></linearGradient><linearGradient id="r32" x1="0" y1="0" x2="1" y2="0"><stop offset="0.0000" stop-color="#0c6c6c"/><stop offset="0.0415" stop-color="#0c6b6c"/><stop offset="0.0830" stop-color="#0b696b"/><stop offset="0.1245" stop-color="#0a676b"/><stop offset="0.1660" stop-color="#09646a"/><stop offset="0.2075" stop-color="#086269"/><stop offset="0.2490" stop-color="#086068"/><stop offset="0.2905" stop-color="#075f67"/><stop offset="0.3320" stop-color="#085d66"/><stop offset="0.3735" stop-color="#085b65"/><stop offset="0.4150" stop-color="#095964"/><stop offset="0.4565" stop-color="#095863"/><stop offset="0.4981" stop-color="#095763"/><stop offset="0.5396" stop-color="#095662"/><stop offset="0.5811" stop-color="#095562"/><stop offset="0.6226" stop-color="#095461"/><stop offset="0.6641" stop-color="#095462"/><stop offset="0.7056" stop-color="#095562"/><stop offset="0.7471" stop-color="#095663"/><stop offset="0.7886" stop-color="#095764"/><stop offset="0.8301" stop-color="#0a5964"/><stop offset="0.8716" stop-color="#0a5c65"/><stop offset="0.9131" stop-color="#0a5f66"/><stop offset="0.9546" stop-color="#0a6167"/><stop offset="0.9961" stop-color="#0a6368"/></linearGradient><linearGradient id="r33" x1="0" y1="0" x2="1" y2="0"><stop offset="0.0000" stop-color="#0c6b6c"/><stop offset="0.0415" stop-color="#0c6a6b"/><stop offset="0.0830" stop-color="#0b686b"/><stop offset="0.1245" stop-color="#0a666a"/><stop offset="0.1660" stop-color="#09646a"/><stop offset="0.2075" stop-color="#086269"/><stop offset="0.2490" stop-color="#086068"/><stop offset="0.2905" stop-color="#075f67"/><stop offset="0.3320" stop-color="#085d66"/><stop offset="0.3735" stop-color="#085b65"/><stop offset="0.4150" stop-color="#095a64"/><stop offset="0.4565" stop-color="#095863"/><stop offset="0.4981" stop-color="#095763"/><stop offset="0.5396" stop-color="#095662"/><stop offset="0.5811" stop-color="#095562"/><stop offset="0.6226" stop-color="#095562"/><stop offset="0.6641" stop-color="#095562"/><stop offset="0.7056" stop-color="#095562"/><stop offset="0.7471" stop-color="#095663"/><stop offset="0.7886" stop-color="#0a5864"/><stop offset="0.8301" stop-color="#0a5a65"/><stop offset="0.8716" stop-color="#0a5c66"/><stop offset="0.9131" stop-color="#0a5f66"/><stop offset="0.9546" stop-color="#0a6267"/><stop offset="0.9961" stop-color="#0a6468"/></linearGradient><linearGradient id="r34" x1="0" y1="0" x2="1" y2="0"><stop offset="0.0000" stop-color="#0c6b6b"/><stop offset="0.0415" stop-color="#0b696b"/><stop offset="0.0830" stop-color="#0b686b"/><stop offset="0.1245" stop-color="#0a666a"/><stop offset="0.1660" stop-color="#09646a"/><stop offset="0.2075" stop-color="#086269"/><stop offset="0.2490" stop-color="#086068"/><stop offset="0.2905" stop-color="#075e67"/><stop offset="0.3320" stop-color="#085d66"/><stop offset="0.3735" stop-color="#085b65"/><stop offset="0.4150" stop-color="#095a64"/><stop offset="0.4565" stop-color="#095864"/><stop offset="0.4981" stop-color="#095763"/><stop offset="0.5396" stop-color="#095662"/><stop offset="0.5811" stop-color="#095662"/><stop offset="0.6226" stop-color="#095562"/><stop offset="0.6641" stop-color="#095562"/><stop offset="0.7056" stop-color="#095663"/><stop offset="0.7471" stop-color="#095763"/><stop offset="0.7886" stop-color="#0a5864"/><stop offset="0.8301" stop-color="#0a5a65"/><stop offset="0.8716" stop-color="#0a5d66"/><stop offset="0.9131" stop-color="#0a6067"/><stop offset="0.9546" stop-color="#0a6267"/><stop offset="0.9961" stop-color="#0a6468"/></linearGradient><linearGradient id="r35" x1="0" y1="0" x2="1" y2="0"><stop offset="0.0000" stop-color="#0c6a6b"/><stop offset="0.0415" stop-color="#0b696b"/><stop offset="0.0830" stop-color="#0b676a"/><stop offset="0.1245" stop-color="#0a656a"/><stop offset="0.1660" stop-color="#096369"/><stop offset="0.2075" stop-color="#086269"/><stop offset="0.2490" stop-color="#086068"/><stop offset="0.2905" stop-color="#085e67"/><stop offset="0.3320" stop-color="#085d66"/><stop offset="0.3735" stop-color="#085b65"/><stop offset="0.4150" stop-color="#095a64"/><stop offset="0.4565" stop-color="#095864"/><stop offset="0.4981" stop-color="#095763"/><stop offset="0.5396" stop-color="#095663"/><stop offset="0.5811" stop-color="#095662"/><stop offset="0.6226" stop-color="#095662"/><stop offset="0.6641" stop-color="#095662"/><stop offset="0.7056" stop-color="#095663"/><stop offset="0.7471" stop-color="#095764"/><stop offset="0.7886" stop-color="#0a5864"/><stop offset="0.8301" stop-color="#0a5b65"/><stop offset="0.8716" stop-color="#0a5d66"/><stop offset="0.9131" stop-color="#0a6067"/><stop offset="0.9546" stop-color="#0a6268"/><stop offset="0.9961" stop-color="#0a6468"/></linearGradient><linearGradient id="r36" x1="0" y1="0" x2="1" y2="0"><stop offset="0.0000" stop-color="#0c696a"/><stop offset="0.0415" stop-color="#0b686a"/><stop offset="0.0830" stop-color="#0a666a"/><stop offset="0.1245" stop-color="#0a656a"/><stop offset="0.1660" stop-color="#096369"/><stop offset="0.2075" stop-color="#086169"/><stop offset="0.2490" stop-color="#086068"/><stop offset="0.2905" stop-color="#085e67"/><stop offset="0.3320" stop-color="#085d66"/><stop offset="0.3735" stop-color="#085b65"/><stop offset="0.4150" stop-color="#095a65"/><stop offset="0.4565" stop-color="#095864"/><stop offset="0.4981" stop-color="#095763"/><stop offset="0.5396" stop-color="#095763"/><stop offset="0.5811" stop-color="#095662"/><stop offset="0.6226" stop-color="#095662"/><stop offset="0.6641" stop-color="#095663"/><stop offset="0.7056" stop-color="#095663"/><stop offset="0.7471" stop-color="#095764"/><stop offset="0.7886" stop-color="#0a5965"/><stop offset="0.8301" stop-color="#0a5b65"/><stop offset="0.8716" stop-color="#0a5e66"/><stop offset="0.9131" stop-color="#0a6067"/><stop offset="0.9546" stop-color="#0a6368"/><stop offset="0.9961" stop-color="#0a6568"/></linearGradient><linearGradient id="r37" x1="0" y1="0" x2="1" y2="0"><stop offset="0.0000" stop-color="#0c686a"/><stop offset="0.0415" stop-color="#0b676a"/><stop offset="0.0830" stop-color="#0a666a"/><stop offset="0.1245" stop-color="#0a646a"/><stop offset="0.1660" stop-color="#096369"/><stop offset="0.2075" stop-color="#086169"/><stop offset="0.2490" stop-color="#085f68"/><stop offset="0.2905" stop-color="#085e67"/><stop offset="0.3320" stop-color="#085d66"/><stop offset="0.3735" stop-color="#085b65"/><stop offset="0.4150" stop-color="#095a65"/><stop offset="0.4565" stop-color="#095964"/><stop offset="0.4981" stop-color="#0a5863"/><stop offset="0.5396" stop-color="#095763"/><stop offset="0.5811" stop-color="#095663"/><stop offset="0.6226" stop-color="#095663"/><stop offset="0.6641" stop-color="#095663"/><stop offset="0.7056" stop-color="#095763"/><stop offset="0.7471" stop-color="#0a5864"/><stop offset="0.7886" stop-color="#0a5965"/><stop offset="0.8301" stop-color="#0a5b66"/><stop offset="0.8716" stop-color="#0a5e66"/><stop offset="0.9131" stop-color="#0a6167"/><stop offset="0.9546" stop-color="#0a6368"/><stop offset="0.9961" stop-color="#0a6569"/></linearGradient><linearGradient id="r38" x1="0" y1="0" x2="1" y2="0"><stop offset="0.0000" stop-color="#0b686a"/><stop offset="0.0415" stop-color="#0b676a"/><stop offset="0.0830" stop-color="#0a656a"/><stop offset="0.1245" stop-color="#0a6469"/><stop offset="0.1660" stop-color="#096269"/><stop offset="0.2075" stop-color="#086169"/><stop offset="0.2490" stop-color="#085f68"/><stop offset="0.2905" stop-color="#085e67"/><stop offset="0.3320" stop-color="#085d66"/><stop offset="0.3735" stop-color="#095b66"/><stop offset="0.4150" stop-color="#095a65"/><stop offset="0.4565" stop-color="#0a5964"/><stop offset="0.4981" stop-color="#0a5864"/><stop offset="0.5396" stop-color="#0a5763"/><stop offset="0.5811" stop-color="#095763"/><stop offset="0.6226" stop-color="#095763"/><stop offset="0.6641" stop-color="#095763"/><stop offset="0.7056" stop-color="#095764"/><stop offset="0.7471" stop-color="#0a5864"/><stop offset="0.7886" stop-color="#0a5a65"/><stop offset="0.8301" stop-color="#0a5c66"/><stop offset="0.8716" stop-color="#0a5f67"/><stop offset="0.9131" stop-color="#0a6167"/><stop offset="0.9546" stop-color="#0b6468"/><stop offset="0.9961" stop-color="#0b6569"/></linearGradient><linearGradient id="r39" x1="0" y1="0" x2="1" y2="0"><stop offset="0.0000" stop-color="#0b6769"/><stop offset="0.0415" stop-color="#0b6669"/><stop offset="0.0830" stop-color="#0a6569"/><stop offset="0.1245" stop-color="#0a6369"/><stop offset="0.1660" stop-color="#096269"/><stop offset="0.2075" stop-color="#086068"/><stop offset="0.2490" stop-color="#085f68"/><stop offset="0.2905" stop-color="#085e67"/><stop offset="0.3320" stop-color="#085d66"/><stop offset="0.3735" stop-color="#095b66"/><stop offset="0.4150" stop-color="#095a65"/><stop offset="0.4565" stop-color="#0a5964"/><stop offset="0.4981" stop-color="#0a5864"/><stop offset="0.5396" stop-color="#0a5763"/><stop offset="0.5811" stop-color="#095763"/><stop offset="0.6226" stop-color="#095763"/><stop offset="0.6641" stop-color="#095764"/><stop offset="0.7056" stop-color="#095864"/><stop offset="0.7471" stop-color="#0a5965"/><stop offset="0.7886" stop-color="#0a5a65"/><stop offset="0.8301" stop-color="#0a5c66"/><stop offset="0.8716" stop-color="#0a5f67"/><stop offset="0.9131" stop-color="#0b6268"/><stop offset="0.9546" stop-color="#0b6468"/><stop offset="0.9961" stop-color="#0b6669"/></linearGradient><linearGradient id="r40" x1="0" y1="0" x2="1" y2="0"><stop offset="0.0000" stop-color="#0b6669"/><stop offset="0.0415" stop-color="#0b6569"/><stop offset="0.0830" stop-color="#0a6469"/><stop offset="0.1245" stop-color="#0a6369"/><stop offset="0.1660" stop-color="#096169"/><stop offset="0.2075" stop-color="#086068"/><stop offset="0.2490" stop-color="#085f68"/><stop offset="0.2905" stop-color="#085e67"/><stop offset="0.3320" stop-color="#085c66"/><stop offset="0.3735" stop-color="#095b66"/><stop offset="0.4150" stop-color="#095a65"/><stop offset="0.4565" stop-color="#0a5964"/><stop offset="0.4981" stop-color="#0a5864"/><stop offset="0.5396" stop-color="#0a5864"/><stop offset="0.5811" stop-color="#0a5763"/><stop offset="0.6226" stop-color="#095763"/><stop offset="0.6641" stop-color="#095864"/><stop offset="0.7056" stop-color="#095864"/><stop offset="0.7471" stop-color="#0a5965"/><stop offset="0.7886" stop-color="#0a5b65"/><stop offset="0.8301" stop-color="#0a5d66"/><stop offset="0.8716" stop-color="#0a5f67"/><stop offset="0.9131" stop-color="#0b6268"/><stop offset="0.9546" stop-color="#0b6469"/><stop offset="0.9961" stop-color="#0b6669"/></linearGradient><linearGradient id="r41" x1="0" y1="0" x2="1" y2="0"><stop offset="0.0000" stop-color="#0b6668"/><stop offset="0.0415" stop-color="#0b6569"/><stop offset="0.0830" stop-color="#0a6469"/><stop offset="0.1245" stop-color="#0a6269"/><stop offset="0.1660" stop-color="#096169"/><stop offset="0.2075" stop-color="#086068"/><stop offset="0.2490" stop-color="#085f68"/><stop offset="0.2905" stop-color="#085e67"/><stop offset="0.3320" stop-color="#085c66"/><stop offset="0.3735" stop-color="#095b66"/><stop offset="0.4150" stop-color="#095a65"/><stop offset="0.4565" stop-color="#0a5964"/><stop offset="0.4981" stop-color="#0a5864"/><stop offset="0.5396" stop-color="#0a5864"/><stop offset="0.5811" stop-color="#0a5864"/><stop offset="0.6226" stop-color="#095864"/><stop offset="0.6641" stop-color="#095864"/><stop offset="0.7056" stop-color="#0a5964"/><stop offset="0.7471" stop-color="#0a5a65"/><stop offset="0.7886" stop-color="#0a5b66"/><stop offset="0.8301" stop-color="#0a5d66"/><stop offset="0.8716" stop-color="#0b6067"/><stop offset="0.9131" stop-color="#0b6368"/><stop offset="0.9546" stop-color="#0b6569"/><stop offset="0.9961" stop-color="#0b6769"/></linearGradient><linearGradient id="r42" x1="0" y1="0" x2="1" y2="0"><stop offset="0.0000" stop-color="#0b6568"/><stop offset="0.0415" stop-color="#0a6468"/><stop offset="0.0830" stop-color="#0a6368"/><stop offset="0.1245" stop-color="#096269"/><stop offset="0.1660" stop-color="#096168"/><stop offset="0.2075" stop-color="#096068"/><stop offset="0.2490" stop-color="#085e68"/><stop offset="0.2905" stop-color="#085d67"/><stop offset="0.3320" stop-color="#085c66"/><stop offset="0.3735" stop-color="#095b66"/><stop offset="0.4150" stop-color="#0a5a65"/><stop offset="0.4565" stop-color="#0a5965"/><stop offset="0.4981" stop-color="#0a5964"/><stop offset="0.5396" stop-color="#0a5864"/><stop offset="0.5811" stop-color="#0a5864"/><stop offset="0.6226" stop-color="#0a5864"/><stop offset="0.6641" stop-color="#0a5864"/><stop offset="0.7056" stop-color="#0a5965"/><stop offset="0.7471" stop-color="#0a5a65"/><stop offset="0.7886" stop-color="#0a5c66"/><stop offset="0.8301" stop-color="#0a5e67"/><stop offset="0.8716" stop-color="#0b6068"/><stop offset="0.9131" stop-color="#0b6368"/><stop offset="0.9546" stop-color="#0b6569"/><stop offset="0.9961" stop-color="#0b676a"/></linearGradient><linearGradient id="r43" x1="0" y1="0" x2="1" y2="0"><stop offset="0.0000" stop-color="#0b6467"/><stop offset="0.0415" stop-color="#0a6368"/><stop offset="0.0830" stop-color="#0a6268"/><stop offset="0.1245" stop-color="#0a6168"/><stop offset="0.1660" stop-color="#096068"/><stop offset="0.2075" stop-color="#095f68"/><stop offset="0.2490" stop-color="#085e68"/><stop offset="0.2905" stop-color="#085d67"/><stop offset="0.3320" stop-color="#085c66"/><stop offset="0.3735" stop-color="#095b66"/><stop offset="0.4150" stop-color="#0a5a65"/><stop offset="0.4565" stop-color="#0a5965"/><stop offset="0.4981" stop-color="#0a5964"/><stop offset="0.5396" stop-color="#0a5864"/><stop offset="0.5811" stop-color="#0a5864"/><stop offset="0.6226" stop-color="#0a5864"/><stop offset="0.6641" stop-color="#0a5964"/><stop offset="0.7056" stop-color="#0a5965"/><stop offset="0.7471" stop-color="#0a5b65"/><stop offset="0.7886" stop-color="#0a5c66"/><stop offset="0.8301" stop-color="#0a5e67"/><stop offset="0.8716" stop-color="#0b6168"/><stop offset="0.9131" stop-color="#0b6369"/><stop offset="0.9546" stop-color="#0b6669"/><stop offset="0.9961" stop-color="#0b676a"/></linearGradient><linearGradient id="r44" x1="0" y1="0" x2="1" y2="0"><stop offset="0.0000" stop-color="#0a6367"/><stop offset="0.0415" stop-color="#0a6368"/><stop offset="0.0830" stop-color="#0a6268"/><stop offset="0.1245" stop-color="#0a6168"/><stop offset="0.1660" stop-color="#096068"/><stop offset="0.2075" stop-color="#095f68"/><stop offset="0.2490" stop-color="#085e68"/><stop offset="0.2905" stop-color="#085d67"/><stop offset="0.3320" stop-color="#095c66"/><stop offset="0.3735" stop-color="#095b66"/><stop offset="0.4150" stop-color="#0a5a65"/><stop offset="0.4565" stop-color="#0a5965"/><stop offset="0.4981" stop-color="#0b5965"/><stop offset="0.5396" stop-color="#0a5964"/><stop offset="0.5811" stop-color="#0a5964"/><stop offset="0.6226" stop-color="#0a5964"/><stop offset="0.6641" stop-color="#0a5965"/><stop offset="0.7056" stop-color="#0a5a65"/><stop offset="0.7471" stop-color="#0a5b66"/><stop offset="0.7886" stop-color="#0a5d66"/><stop offset="0.8301" stop-color="#0b5f67"/><stop offset="0.8716" stop-color="#0b6168"/><stop offset="0.9131" stop-color="#0b6469"/><stop offset="0.9546" stop-color="#0b666a"/><stop offset="0.9961" stop-color="#0b686a"/></linearGradient><linearGradient id="r45" x1="0" y1="0" x2="1" y2="0"><stop offset="0.0000" stop-color="#0a6367"/><stop offset="0.0415" stop-color="#0a6267"/><stop offset="0.0830" stop-color="#0a6168"/><stop offset="0.1245" stop-color="#0a6168"/><stop offset="0.1660" stop-color="#096068"/><stop offset="0.2075" stop-color="#095f68"/><stop offset="0.2490" stop-color="#095e68"/><stop offset="0.2905" stop-color="#085d67"/><stop offset="0.3320" stop-color="#095c66"/><stop offset="0.3735" stop-color="#095b66"/><stop offset="0.4150" stop-color="#0a5a65"/><stop offset="0.4565" stop-color="#0b5a65"/><stop offset="0.4981" stop-color="#0b5965"/><stop offset="0.5396" stop-color="#0b5965"/><stop offset="0.5811" stop-color="#0a5965"/><stop offset="0.6226" stop-color="#0a5965"/><stop offset="0.6641" stop-color="#0a5965"/><stop offset="0.7056" stop-color="#0a5a65"/><stop offset="0.7471" stop-color="#0a5b66"/><stop offset="0.7886" stop-color="#0a5d67"/><stop offset="0.8301" stop-color="#0b5f67"/><stop offset="0.8716" stop-color="#0b6268"/><stop offset="0.9131" stop-color="#0b6469"/><stop offset="0.9546" stop-color="#0b676a"/><stop offset="0.9961" stop-color="#0b686a"/></linearGradient><linearGradient id="r46" x1="0" y1="0" x2="1" y2="0"><stop offset="0.0000" stop-color="#0a6266"/><stop offset="0.0415" stop-color="#0a6167"/><stop offset="0.0830" stop-color="#0a6167"/><stop offset="0.1245" stop-color="#0a6068"/><stop offset="0.1660" stop-color="#095f68"/><stop offset="0.2075" stop-color="#095e68"/><stop offset="0.2490" stop-color="#095e67"/><stop offset="0.2905" stop-color="#095d67"/><stop offset="0.3320" stop-color="#095c66"/><stop offset="0.3735" stop-color="#095b66"/><stop offset="0.4150" stop-color="#0a5a65"/><stop offset="0.4565" stop-color="#0b5a65"/><stop offset="0.4981" stop-color="#0b5965"/><stop offset="0.5396" stop-color="#0b5965"/><stop offset="0.5811" stop-color="#0a5965"/><stop offset="0.6226" stop-color="#0a5965"/><stop offset="0.6641" stop-color="#0a5a65"/><stop offset="0.7056" stop-color="#0a5b66"/><stop offset="0.7471" stop-color="#0a5c66"/><stop offset="0.7886" stop-color="#0a5e67"/><stop offset="0.8301" stop-color="#0b6068"/><stop offset="0.8716" stop-color="#0b6268"/><stop offset="0.9131" stop-color="#0b6569"/><stop offset="0.9546" stop-color="#0b676a"/><stop offset="0.9961" stop-color="#0b696b"/></linearGradient><linearGradient id="r47" x1="0" y1="0" x2="1" y2="0"><stop offset="0.0000" stop-color="#0a6166"/><stop offset="0.0415" stop-color="#0a6167"/><stop offset="0.0830" stop-color="#0a6067"/><stop offset="0.1245" stop-color="#0a6068"/><stop offset="0.1660" stop-color="#095f68"/><stop offset="0.2075" stop-color="#095e68"/><stop offset="0.2490" stop-color="#095d67"/><stop offset="0.2905" stop-color="#095c67"/><stop offset="0.3320" stop-color="#095c66"/><stop offset="0.3735" stop-color="#095b66"/><stop offset="0.4150" stop-color="#0a5a65"/><stop offset="0.4565" stop-color="#0b5a65"/><stop offset="0.4981" stop-color="#0b5a65"/><stop offset="0.5396" stop-color="#0b5965"/><stop offset="0.5811" stop-color="#0b5a65"/><stop offset="0.6226" stop-color="#0a5a65"/><stop offset="0.6641" stop-color="#0a5a65"/><stop offset="0.7056" stop-color="#0a5b66"/><stop offset="0.7471" stop-color="#0a5c66"/><stop offset="0.7886" stop-color="#0b5e67"/><stop offset="0.8301" stop-color="#0b6068"/><stop offset="0.8716" stop-color="#0b6369"/><stop offset="0.9131" stop-color="#0b656a"/><stop offset="0.9546" stop-color="#0b686a"/><stop offset="0.9961" stop-color="#0b696b"/></linearGradient><linearGradient id="r48" x1="0" y1="0" x2="1" y2="0"><stop offset="0.0000" stop-color="#0a6165"/><stop offset="0.0415" stop-color="#0a6066"/><stop offset="0.0830" stop-color="#0a6067"/><stop offset="0.1245" stop-color="#0a5f68"/><stop offset="0.1660" stop-color="#095f68"/><stop offset="0.2075" stop-color="#095e68"/><stop offset="0.2490" stop-color="#095d67"/><stop offset="0.2905" stop-color="#095c67"/><stop offset="0.3320" stop-color="#095b66"/><stop offset="0.3735" stop-color="#0a5b66"/><stop offset="0.4150" stop-color="#0a5a66"/><stop offset="0.4565" stop-color="#0b5a65"/><stop offset="0.4981" stop-color="#0b5a65"/><stop offset="0.5396" stop-color="#0b5a65"/><stop offset="0.5811" stop-color="#0b5a65"/><stop offset="0.6226" stop-color="#0b5a65"/><stop offset="0.6641" stop-color="#0a5b66"/><stop offset="0.7056" stop-color="#0a5b66"/><stop offset="0.7471" stop-color="#0a5d67"/><stop offset="0.7886" stop-color="#0b5f67"/><stop offset="0.8301" stop-color="#0b6168"/><stop offset="0.8716" stop-color="#0b6369"/><stop offset="0.9131" stop-color="#0b666a"/><stop offset="0.9546" stop-color="#0b686b"/><stop offset="0.9961" stop-color="#0b6a6b"/></linearGradient><linearGradient id="r49" x1="0" y1="0" x2="1" y2="0"><stop offset="0.0000" stop-color="#0a6065"/><stop offset="0.0415" stop-color="#0a6066"/><stop offset="0.0830" stop-color="#0a5f67"/><stop offset="0.1245" stop-color="#0a5f67"/><stop offset="0.1660" stop-color="#095e68"/><stop offset="0.2075" stop-color="#095e68"/><stop offset="0.2490" stop-color="#095d67"/><stop offset="0.2905" stop-color="#095c67"/><stop offset="0.3320" stop-color="#095b66"/><stop offset="0.3735" stop-color="#0a5b66"/><stop offset="0.4150" stop-color="#0b5a66"/><stop offset="0.4565" stop-color="#0b5a66"/><stop offset="0.4981" stop-color="#0b5a65"/><stop offset="0.5396" stop-color="#0b5a65"/><stop offset="0.5811" stop-color="#0b5a65"/><stop offset="0.6226" stop-color="#0b5a66"/><stop offset="0.6641" stop-color="#0a5b66"/><stop offset="0.7056" stop-color="#0a5c66"/><stop offset="0.7471" stop-color="#0b5d67"/><stop offset="0.7886" stop-color="#0b5f67"/><stop offset="0.8301" stop-color="#0b6168"/><stop offset="0.8716" stop-color="#0b6469"/><stop offset="0.9131" stop-color="#0b676a"/><stop offset="0.9546" stop-color="#0b696b"/><stop offset="0.9961" stop-color="#0c6a6b"/></linearGradient><linearGradient id="r50" x1="0" y1="0" x2="1" y2="0"><stop offset="0.0000" stop-color="#095f65"/><stop offset="0.0415" stop-color="#0a5f66"/><stop offset="0.0830" stop-color="#0a5f67"/><stop offset="0.1245" stop-color="#0a5e67"/><stop offset="0.1660" stop-color="#095e68"/><stop offset="0.2075" stop-color="#095d67"/><stop offset="0.2490" stop-color="#095d67"/><stop offset="0.2905" stop-color="#095c67"/><stop offset="0.3320" stop-color="#095b66"/><stop offset="0.3735" stop-color="#0a5a66"/><stop offset="0.4150" stop-color="#0b5a66"/><stop offset="0.4565" stop-color="#0b5a66"/><stop offset="0.4981" stop-color="#0c5a66"/><stop offset="0.5396" stop-color="#0c5a66"/><stop offset="0.5811" stop-color="#0b5a66"/><stop offset="0.6226" stop-color="#0b5b66"/><stop offset="0.6641" stop-color="#0b5b66"/><stop offset="0.7056" stop-color="#0b5c66"/><stop offset="0.7471" stop-color="#0b5e67"/><stop offset="0.7886" stop-color="#0b6068"/><stop offset="0.8301" stop-color="#0b6268"/><stop offset="0.8716" stop-color="#0b6469"/><stop offset="0.9131" stop-color="#0b676a"/><stop offset="0.9546" stop-color="#0b696b"/><stop offset="0.9961" stop-color="#0c6b6c"/></linearGradient><linearGradient id="r51" x1="0" y1="0" x2="1" y2="0"><stop offset="0.0000" stop-color="#095f64"/><stop offset="0.0415" stop-color="#0a5f65"/><stop offset="0.0830" stop-color="#0a5e66"/><stop offset="0.1245" stop-color="#0a5e67"/><stop offset="0.1660" stop-color="#0a5e67"/><stop offset="0.2075" stop-color="#095d67"/><stop offset="0.2490" stop-color="#095c67"/><stop offset="0.2905" stop-color="#095c67"/><stop offset="0.3320" stop-color="#095b66"/><stop offset="0.3735" stop-color="#0a5a66"/><stop offset="0.4150" stop-color="#0b5a66"/><stop offset="0.4565" stop-color="#0c5a66"/><stop offset="0.4981" stop-color="#0c5a66"/><stop offset="0.5396" stop-color="#0c5a66"/><stop offset="0.5811" stop-color="#0b5b66"/><stop offset="0.6226" stop-color="#0b5b66"/><stop offset="0.6641" stop-color="#0b5c66"/><stop offset="0.7056" stop-color="#0b5d67"/><stop offset="0.7471" stop-color="#0b5e67"/><stop offset="0.7886" stop-color="#0b6068"/><stop offset="0.8301" stop-color="#0b6269"/><stop offset="0.8716" stop-color="#0b656a"/><stop offset="0.9131" stop-color="#0b686b"/><stop offset="0.9546" stop-color="#0b6a6b"/><stop offset="0.9961" stop-color="#0c6b6c"/></linearGradient><linearGradient id="r52" x1="0" y1="0" x2="1" y2="0"><stop offset="0.0000" stop-color="#095e64"/><stop offset="0.0415" stop-color="#095e65"/><stop offset="0.0830" stop-color="#0a5e66"/><stop offset="0.1245" stop-color="#0a5e67"/><stop offset="0.1660" stop-color="#0a5d67"/><stop offset="0.2075" stop-color="#095d67"/><stop offset="0.2490" stop-color="#095c67"/><stop offset="0.2905" stop-color="#095b66"/><stop offset="0.3320" stop-color="#095b66"/><stop offset="0.3735" stop-color="#0a5a66"/><stop offset="0.4150" stop-color="#0b5a66"/><stop offset="0.4565" stop-color="#0c5a66"/><stop offset="0.4981" stop-color="#0c5a66"/><stop offset="0.5396" stop-color="#0c5b66"/><stop offset="0.5811" stop-color="#0c5b66"/><stop offset="0.6226" stop-color="#0b5b66"/><stop offset="0.6641" stop-color="#0b5c66"/><stop offset="0.7056" stop-color="#0b5d67"/><stop offset="0.7471" stop-color="#0b5f67"/><stop offset="0.7886" stop-color="#0b6068"/><stop offset="0.8301" stop-color="#0b6369"/><stop offset="0.8716" stop-color="#0b666a"/><stop offset="0.9131" stop-color="#0b686b"/><stop offset="0.9546" stop-color="#0c6a6c"/><stop offset="0.9961" stop-color="#0c6c6c"/></linearGradient><linearGradient id="r53" x1="0" y1="0" x2="1" y2="0"><stop offset="0.0000" stop-color="#095d64"/><stop offset="0.0415" stop-color="#095d65"/><stop offset="0.0830" stop-color="#0a5d66"/><stop offset="0.1245" stop-color="#0a5d67"/><stop offset="0.1660" stop-color="#0a5d67"/><stop offset="0.2075" stop-color="#0a5d67"/><stop offset="0.2490" stop-color="#095c67"/><stop offset="0.2905" stop-color="#095b66"/><stop offset="0.3320" stop-color="#095a66"/><stop offset="0.3735" stop-color="#0a5a66"/><stop offset="0.4150" stop-color="#0b5a66"/><stop offset="0.4565" stop-color="#0c5a66"/><stop offset="0.4981" stop-color="#0c5b66"/><stop offset="0.5396" stop-color="#0c5b66"/><stop offset="0.5811" stop-color="#0c5b66"/><stop offset="0.6226" stop-color="#0b5c66"/><stop offset="0.6641" stop-color="#0b5c67"/><stop offset="0.7056" stop-color="#0b5d67"/><stop offset="0.7471" stop-color="#0b5f68"/><stop offset="0.7886" stop-color="#0b6168"/><stop offset="0.8301" stop-color="#0b6369"/><stop offset="0.8716" stop-color="#0b666a"/><stop offset="0.9131" stop-color="#0b696b"/><stop offset="0.9546" stop-color="#0c6b6c"/><stop offset="0.9961" stop-color="#0c6c6d"/></linearGradient><linearGradient id="r54" x1="0" y1="0" x2="1" y2="0"><stop offset="0.0000" stop-color="#095d63"/><stop offset="0.0415" stop-color="#095d65"/><stop offset="0.0830" stop-color="#0a5d66"/><stop offset="0.1245" stop-color="#0a5d67"/><stop offset="0.1660" stop-color="#0a5d67"/><stop offset="0.2075" stop-color="#0a5c67"/><stop offset="0.2490" stop-color="#095c67"/><stop offset="0.2905" stop-color="#095b66"/><stop offset="0.3320" stop-color="#0a5a66"/><stop offset="0.3735" stop-color="#0a5a66"/><stop offset="0.4150" stop-color="#0b5a66"/><stop offset="0.4565" stop-color="#0c5a66"/><stop offset="0.4981" stop-color="#0d5b66"/><stop offset="0.5396" stop-color="#0c5b66"/><stop offset="0.5811" stop-color="#0c5c67"/><stop offset="0.6226" stop-color="#0c5c67"/><stop offset="0.6641" stop-color="#0b5d67"/><stop offset="0.7056" stop-color="#0b5e67"/><stop offset="0.7471" stop-color="#0b5f68"/><stop offset="0.7886" stop-color="#0b6168"/><stop offset="0.8301" stop-color="#0b6469"/><stop offset="0.8716" stop-color="#0b676a"/><stop offset="0.9131" stop-color="#0b696b"/><stop offset="0.9546" stop-color="#0c6b6c"/><stop offset="0.9961" stop-color="#0c6c6d"/></linearGradient><linearGradient id="r55" x1="0" y1="0" x2="1" y2="0"><stop offset="0.0000" stop-color="#095c63"/><stop offset="0.0415" stop-color="#095c64"/><stop offset="0.0830" stop-color="#0a5d66"/><stop offset="0.1245" stop-color="#0a5d66"/><stop offset="0.1660" stop-color="#0a5c67"/><stop offset="0.2075" stop-color="#0a5c67"/><stop offset="0.2490" stop-color="#095b67"/><stop offset="0.2905" stop-color="#095b66"/><stop offset="0.3320" stop-color="#0a5a66"/><stop offset="0.3735" stop-color="#0a5a66"/><stop offset="0.4150" stop-color="#0b5a66"/><stop offset="0.4565" stop-color="#0c5a66"/><stop offset="0.4981" stop-color="#0d5b66"/><stop offset="0.5396" stop-color="#0d5b67"/><stop offset="0.5811" stop-color="#0c5c67"/><stop offset="0.6226" stop-color="#0c5c67"/><stop offset="0.6641" stop-color="#0c5d67"/><stop offset="0.7056" stop-color="#0b5e67"/><stop offset="0.7471" stop-color="#0b6068"/><stop offset="0.7886" stop-color="#0b6269"/><stop offset="0.8301" stop-color="#0b646a"/><stop offset="0.8716" stop-color="#0b676b"/><stop offset="0.9131" stop-color="#0b6a6c"/><stop offset="0.9546" stop-color="#0c6c6d"/><stop offset="0.9961" stop-color="#0c6d6d"/></linearGradient><linearGradient id="r56" x1="0" y1="0" x2="1" y2="0"><stop offset="0.0000" stop-color="#095c63"/><stop offset="0.0415" stop-color="#095c64"/><stop offset="0.0830" stop-color="#0a5c65"/><stop offset="0.1245" stop-color="#0a5c66"/><stop offset="0.1660" stop-color="#0a5c67"/><stop offset="0.2075" stop-color="#0a5c67"/><stop offset="0.2490" stop-color="#0a5b66"/><stop offset="0.2905" stop-color="#095a66"/><stop offset="0.3320" stop-color="#0a5a66"/><stop offset="0.3735" stop-color="#0a5a65"/><stop offset="0.4150" stop-color="#0c5a66"/><stop offset="0.4565" stop-color="#0d5a66"/><stop offset="0.4981" stop-color="#0d5b67"/><stop offset="0.5396" stop-color="#0d5c67"/><stop offset="0.5811" stop-color="#0d5c67"/><stop offset="0.6226" stop-color="#0c5d67"/><stop offset="0.6641" stop-color="#0c5d67"/><stop offset="0.7056" stop-color="#0c5f68"/><stop offset="0.7471" stop-color="#0b6068"/><stop offset="0.7886" stop-color="#0b6269"/><stop offset="0.8301" stop-color="#0b656a"/><stop offset="0.8716" stop-color="#0b686b"/><stop offset="0.9131" stop-color="#0b6a6c"/><stop offset="0.9546" stop-color="#0c6c6d"/><stop offset="0.9961" stop-color="#0c6d6d"/></linearGradient><linearGradient id="r57" x1="0" y1="0" x2="1" y2="0"><stop offset="0.0000" stop-color="#095b63"/><stop offset="0.0415" stop-color="#095c64"/><stop offset="0.0830" stop-color="#0a5c65"/><stop offset="0.1245" stop-color="#0a5c66"/><stop offset="0.1660" stop-color="#0a5c67"/><stop offset="0.2075" stop-color="#0a5b67"/><stop offset="0.2490" stop-color="#0a5b66"/><stop offset="0.2905" stop-color="#095a66"/><stop offset="0.3320" stop-color="#0a5a65"/><stop offset="0.3735" stop-color="#0b5965"/><stop offset="0.4150" stop-color="#0c5a66"/><stop offset="0.4565" stop-color="#0d5b66"/><stop offset="0.4981" stop-color="#0d5b67"/><stop offset="0.5396" stop-color="#0d5c67"/><stop offset="0.5811" stop-color="#0d5c67"/><stop offset="0.6226" stop-color="#0c5d67"/><stop offset="0.6641" stop-color="#0c5e67"/><stop offset="0.7056" stop-color="#0c5f68"/><stop offset="0.7471" stop-color="#0c6168"/><stop offset="0.7886" stop-color="#0b6369"/><stop offset="0.8301" stop-color="#0b656a"/><stop offset="0.8716" stop-color="#0b686b"/><stop offset="0.9131" stop-color="#0b6b6c"/><stop offset="0.9546" stop-color="#0c6c6d"/><stop offset="0.9961" stop-color="#0c6e6e"/></linearGradient><linearGradient id="r58" x1="0" y1="0" x2="1" y2="0"><stop offset="0.0000" stop-color="#085b62"/><stop offset="0.0415" stop-color="#095b64"/><stop offset="0.0830" stop-color="#0a5b65"/><stop offset="0.1245" stop-color="#0a5c66"/><stop offset="0.1660" stop-color="#0a5c67"/><stop offset="0.2075" stop-color="#0a5b67"/><stop offset="0.2490" stop-color="#0a5b66"/><stop offset="0.2905" stop-color="#0a5a66"/><stop offset="0.3320" stop-color="#0a5965"/><stop offset="0.3735" stop-color="#0b5965"/><stop offset="0.4150" stop-color="#0c5a66"/><stop offset="0.4565" stop-color="#0d5b66"/><stop offset="0.4981" stop-color="#0d5b67"/><stop offset="0.5396" stop-color="#0d5c67"/><stop offset="0.5811" stop-color="#0d5d67"/><stop offset="0.6226" stop-color="#0d5d67"/><stop offset="0.6641" stop-color="#0c5e68"/><stop offset="0.7056" stop-color="#0c5f68"/><stop offset="0.7471" stop-color="#0c6169"/><stop offset="0.7886" stop-color="#0b6369"/><stop offset="0.8301" stop-color="#0b666a"/><stop offset="0.8716" stop-color="#0b696b"/><stop offset="0.9131" stop-color="#0c6b6c"/><stop offset="0.9546" stop-color="#0c6d6d"/><stop offset="0.9961" stop-color="#0c6e6e"/></linearGradient><linearGradient id="r59" x1="0" y1="0" x2="1" y2="0"><stop offset="0.0000" stop-color="#085a62"/><stop offset="0.0415" stop-color="#095b64"/><stop offset="0.0830" stop-color="#0a5b65"/><stop offset="0.1245" stop-color="#0a5b66"/><stop offset="0.1660" stop-color="#0a5b66"/><stop offset="0.2075" stop-color="#0a5b66"/><stop offset="0.2490" stop-color="#0a5a66"/><stop offset="0.2905" stop-color="#0a5a66"/><stop offset="0.3320" stop-color="#0a5965"/><stop offset="0.3735" stop-color="#0b5965"/><stop offset="0.4150" stop-color="#0c5a66"/><stop offset="0.4565" stop-color="#0d5b66"/><stop offset="0.4981" stop-color="#0e5b67"/><stop offset="0.5396" stop-color="#0e5c67"/><stop offset="0.5811" stop-color="#0d5d67"/><stop offset="0.6226" stop-color="#0d5d68"/><stop offset="0.6641" stop-color="#0d5e68"/><stop offset="0.7056" stop-color="#0c6068"/><stop offset="0.7471" stop-color="#0c6169"/><stop offset="0.7886" stop-color="#0c6469"/><stop offset="0.8301" stop-color="#0b666a"/><stop offset="0.8716" stop-color="#0b696b"/><stop offset="0.9131" stop-color="#0c6b6d"/><stop offset="0.9546" stop-color="#0c6d6e"/><stop offset="0.9961" stop-color="#0c6e6e"/></linearGradient><linearGradient id="r60" x1="0" y1="0" x2="1" y2="0"><stop offset="0.0000" stop-color="#085a62"/><stop offset="0.0415" stop-color="#095a63"/><stop offset="0.0830" stop-color="#0a5b65"/><stop offset="0.1245" stop-color="#0a5b66"/><stop offset="0.1660" stop-color="#0a5b66"/><stop offset="0.2075" stop-color="#0a5b66"/><stop offset="0.2490" stop-color="#0a5a66"/><stop offset="0.2905" stop-color="#0a5965"/><stop offset="0.3320" stop-color="#0a5965"/><stop offset="0.3735" stop-color="#0b5965"/><stop offset="0.4150" stop-color="#0c5a66"/><stop offset="0.4565" stop-color="#0d5b67"/><stop offset="0.4981" stop-color="#0e5c67"/><stop offset="0.5396" stop-color="#0e5c68"/><stop offset="0.5811" stop-color="#0e5d68"/><stop offset="0.6226" stop-color="#0d5e68"/><stop offset="0.6641" stop-color="#0d5f68"/><stop offset="0.7056" stop-color="#0c6068"/><stop offset="0.7471" stop-color="#0c6269"/><stop offset="0.7886" stop-color="#0c646a"/><stop offset="0.8301" stop-color="#0b676b"/><stop offset="0.8716" stop-color="#0b696c"/><stop offset="0.9131" stop-color="#0c6c6d"/><stop offset="0.9546" stop-color="#0c6e6e"/><stop offset="0.9961" stop-color="#0c6f6e"/></linearGradient><linearGradient id="r61" x1="0" y1="0" x2="1" y2="0"><stop offset="0.0000" stop-color="#085962"/><stop offset="0.0415" stop-color="#095a63"/><stop offset="0.0830" stop-color="#0a5a65"/><stop offset="0.1245" stop-color="#0a5b66"/><stop offset="0.1660" stop-color="#0a5b66"/><stop offset="0.2075" stop-color="#0a5a66"/><stop offset="0.2490" stop-color="#0a5a66"/><stop offset="0.2905" stop-color="#0a5965"/><stop offset="0.3320" stop-color="#0a5965"/><stop offset="0.3735" stop-color="#0b5965"/><stop offset="0.4150" stop-color="#0c5a66"/><stop offset="0.4565" stop-color="#0d5b67"/><stop offset="0.4981" stop-color="#0e5c67"/><stop offset="0.5396" stop-color="#0e5c68"/><stop offset="0.5811" stop-color="#0e5d68"/><stop offset="0.6226" stop-color="#0d5e68"/><stop offset="0.6641" stop-color="#0d5f68"/><stop offset="0.7056" stop-color="#0d6069"/><stop offset="0.7471" stop-color="#0c6269"/><stop offset="0.7886" stop-color="#0c646a"/><stop offset="0.8301" stop-color="#0c676b"/><stop offset="0.8716" stop-color="#0b6a6c"/><stop offset="0.9131" stop-color="#0c6c6d"/><stop offset="0.9546" stop-color="#0c6e6e"/><stop offset="0.9961" stop-color="#0c6f6f"/></linearGradient><linearGradient id="r62" x1="0" y1="0" x2="1" y2="0"><stop offset="0.0000" stop-color="#085962"/><stop offset="0.0415" stop-color="#095963"/><stop offset="0.0830" stop-color="#0a5a64"/><stop offset="0.1245" stop-color="#0a5a65"/><stop offset="0.1660" stop-color="#0a5a66"/><stop offset="0.2075" stop-color="#0a5a66"/><stop offset="0.2490" stop-color="#0a5966"/><stop offset="0.2905" stop-color="#0a5965"/><stop offset="0.3320" stop-color="#0a5965"/><stop offset="0.3735" stop-color="#0b5965"/><stop offset="0.4150" stop-color="#0c5a66"/><stop offset="0.4565" stop-color="#0e5b67"/><stop offset="0.4981" stop-color="#0e5c67"/><stop offset="0.5396" stop-color="#0e5d68"/><stop offset="0.5811" stop-color="#0e5d68"/><stop offset="0.6226" stop-color="#0e5e68"/><stop offset="0.6641" stop-color="#0d5f68"/><stop offset="0.7056" stop-color="#0d6169"/><stop offset="0.7471" stop-color="#0c6269"/><stop offset="0.7886" stop-color="#0c656a"/><stop offset="0.8301" stop-color="#0c676b"/><stop offset="0.8716" stop-color="#0c6a6c"/><stop offset="0.9131" stop-color="#0c6d6d"/><stop offset="0.9546" stop-color="#0c6e6e"/><stop offset="0.9961" stop-color="#0c6f6f"/></linearGradient><linearGradient id="r63" x1="0" y1="0" x2="1" y2="0"><stop offset="0.0000" stop-color="#085861"/><stop offset="0.0415" stop-color="#095963"/><stop offset="0.0830" stop-color="#0a5a64"/><stop offset="0.1245" stop-color="#0a5a65"/><stop offset="0.1660" stop-color="#0a5a66"/><stop offset="0.2075" stop-color="#0a5a66"/><stop offset="0.2490" stop-color="#0a5965"/><stop offset="0.2905" stop-color="#0a5965"/><stop offset="0.3320" stop-color="#0a5865"/><stop offset="0.3735" stop-color="#0b5965"/><stop offset="0.4150" stop-color="#0c5966"/><stop offset="0.4565" stop-color="#0e5b67"/><stop offset="0.4981" stop-color="#0f5c68"/><stop offset="0.5396" stop-color="#0f5d68"/><stop offset="0.5811" stop-color="#0e5e68"/><stop offset="0.6226" stop-color="#0e5e68"/><stop offset="0.6641" stop-color="#0e5f69"/><stop offset="0.7056" stop-color="#0d6169"/><stop offset="0.7471" stop-color="#0d6369"/><stop offset="0.7886" stop-color="#0c656a"/><stop offset="0.8301" stop-color="#0c686b"/><stop offset="0.8716" stop-color="#0c6b6c"/><stop offset="0.9131" stop-color="#0c6d6d"/><stop offset="0.9546" stop-color="#0c6f6e"/><stop offset="0.9961" stop-color="#0c706f"/></linearGradient><linearGradient id="r64" x1="0" y1="0" x2="1" y2="0"><stop offset="0.0000" stop-color="#085861"/><stop offset="0.0415" stop-color="#095963"/><stop offset="0.0830" stop-color="#0a5964"/><stop offset="0.1245" stop-color="#0a5a65"/><stop offset="0.1660" stop-color="#0a5a66"/><stop offset="0.2075" stop-color="#0a5966"/><stop offset="0.2490" stop-color="#0a5965"/><stop offset="0.2905" stop-color="#0a5865"/><stop offset="0.3320" stop-color="#0a5864"/><stop offset="0.3735" stop-color="#0b5865"/><stop offset="0.4150" stop-color="#0d5966"/><stop offset="0.4565" stop-color="#0e5b67"/><stop offset="0.4981" stop-color="#0f5c68"/><stop offset="0.5396" stop-color="#0f5d68"/><stop offset="0.5811" stop-color="#0f5e68"/><stop offset="0.6226" stop-color="#0e5f69"/><stop offset="0.6641" stop-color="#0e6069"/><stop offset="0.7056" stop-color="#0d6169"/><stop offset="0.7471" stop-color="#0d636a"/><stop offset="0.7886" stop-color="#0c666a"/><stop offset="0.8301" stop-color="#0c686b"/><stop offset="0.8716" stop-color="#0c6b6c"/><stop offset="0.9131" stop-color="#0c6d6e"/><stop offset="0.9546" stop-color="#0c6f6f"/><stop offset="0.9961" stop-color="#0c706f"/></linearGradient><linearGradient id="r65" x1="0" y1="0" x2="1" y2="0"><stop offset="0.0000" stop-color="#085861"/><stop offset="0.0415" stop-color="#095863"/><stop offset="0.0830" stop-color="#0a5964"/><stop offset="0.1245" stop-color="#0a5965"/><stop offset="0.1660" stop-color="#0a5a66"/><stop offset="0.2075" stop-color="#0a5965"/><stop offset="0.2490" stop-color="#0a5965"/><stop offset="0.2905" stop-color="#0a5864"/><stop offset="0.3320" stop-color="#0a5864"/><stop offset="0.3735" stop-color="#0b5865"/><stop offset="0.4150" stop-color="#0d5966"/><stop offset="0.4565" stop-color="#0e5b67"/><stop offset="0.4981" stop-color="#0f5c68"/><stop offset="0.5396" stop-color="#0f5d68"/><stop offset="0.5811" stop-color="#0f5e69"/><stop offset="0.6226" stop-color="#0f5f69"/><stop offset="0.6641" stop-color="#0e6069"/><stop offset="0.7056" stop-color="#0e6169"/><stop offset="0.7471" stop-color="#0d636a"/><stop offset="0.7886" stop-color="#0c666a"/><stop offset="0.8301" stop-color="#0c696b"/><stop offset="0.8716" stop-color="#0c6b6d"/><stop offset="0.9131" stop-color="#0c6e6e"/><stop offset="0.9546" stop-color="#0c6f6f"/><stop offset="0.9961" stop-color="#0c706f"/></linearGradient><linearGradient id="r66" x1="0" y1="0" x2="1" y2="0"><stop offset="0.0000" stop-color="#085761"/><stop offset="0.0415" stop-color="#095862"/><stop offset="0.0830" stop-color="#0a5964"/><stop offset="0.1245" stop-color="#0a5965"/><stop offset="0.1660" stop-color="#0a5965"/><stop offset="0.2075" stop-color="#0a5965"/><stop offset="0.2490" stop-color="#0a5865"/><stop offset="0.2905" stop-color="#0a5864"/><stop offset="0.3320" stop-color="#0a5864"/><stop offset="0.3735" stop-color="#0b5865"/><stop offset="0.4150" stop-color="#0d5966"/><stop offset="0.4565" stop-color="#0e5b67"/><stop offset="0.4981" stop-color="#0f5c68"/><stop offset="0.5396" stop-color="#105d68"/><stop offset="0.5811" stop-color="#0f5e69"/><stop offset="0.6226" stop-color="#0f5f69"/><stop offset="0.6641" stop-color="#0e6069"/><stop offset="0.7056" stop-color="#0e6269"/><stop offset="0.7471" stop-color="#0d646a"/><stop offset="0.7886" stop-color="#0d666b"/><stop offset="0.8301" stop-color="#0c696c"/><stop offset="0.8716" stop-color="#0c6c6d"/><stop offset="0.9131" stop-color="#0c6e6e"/><stop offset="0.9546" stop-color="#0c706f"/><stop offset="0.9961" stop-color="#0c706f"/></linearGradient><linearGradient id="r67" x1="0" y1="0" x2="1" y2="0"><stop offset="0.0000" stop-color="#085761"/><stop offset="0.0415" stop-color="#095862"/><stop offset="0.0830" stop-color="#0a5864"/><stop offset="0.1245" stop-color="#0a5965"/><stop offset="0.1660" stop-color="#0a5965"/><stop offset="0.2075" stop-color="#0a5965"/><stop offset="0.2490" stop-color="#0a5865"/><stop offset="0.2905" stop-color="#0a5864"/><stop offset="0.3320" stop-color="#0a5764"/><stop offset="0.3735" stop-color="#0b5864"/><stop offset="0.4150" stop-color="#0d5966"/><stop offset="0.4565" stop-color="#0f5b67"/><stop offset="0.4981" stop-color="#105c68"/><stop offset="0.5396" stop-color="#105d69"/><stop offset="0.5811" stop-color="#105e69"/><stop offset="0.6226" stop-color="#0f5f69"/><stop offset="0.6641" stop-color="#0f6069"/><stop offset="0.7056" stop-color="#0e626a"/><stop offset="0.7471" stop-color="#0d646a"/><stop offset="0.7886" stop-color="#0d676b"/><stop offset="0.8301" stop-color="#0c696c"/><stop offset="0.8716" stop-color="#0c6c6d"/><stop offset="0.9131" stop-color="#0c6e6e"/><stop offset="0.9546" stop-color="#0c706f"/><stop offset="0.9961" stop-color="#0c7170"/></linearGradient><linearGradient id="r68" x1="0" y1="0" x2="1" y2="0"><stop offset="0.0000" stop-color="#085761"/><stop offset="0.0415" stop-color="#095862"/><stop offset="0.0830" stop-color="#0a5864"/><stop offset="0.1245" stop-color="#0a5965"/><stop offset="0.1660" stop-color="#0a5965"/><stop offset="0.2075" stop-color="#0a5865"/><stop offset="0.2490" stop-color="#0a5864"/><stop offset="0.2905" stop-color="#0a5764"/><stop offset="0.3320" stop-color="#0a5764"/><stop offset="0.3735" stop-color="#0b5864"/><stop offset="0.4150" stop-color="#0d5966"/><stop offset="0.4565" stop-color="#0f5b67"/><stop offset="0.4981" stop-color="#105c68"/><stop offset="0.5396" stop-color="#105d69"/><stop offset="0.5811" stop-color="#105e69"/><stop offset="0.6226" stop-color="#105f69"/><stop offset="0.6641" stop-color="#0f6169"/><stop offset="0.7056" stop-color="#0e626a"/><stop offset="0.7471" stop-color="#0e646a"/><stop offset="0.7886" stop-color="#0d676b"/><stop offset="0.8301" stop-color="#0c6a6c"/><stop offset="0.8716" stop-color="#0c6c6d"/><stop offset="0.9131" stop-color="#0c6f6e"/><stop offset="0.9546" stop-color="#0c706f"/><stop offset="0.9961" stop-color="#0c7170"/></linearGradient><linearGradient id="r69" x1="0" y1="0" x2="1" y2="0"><stop offset="0.0000" stop-color="#085661"/><stop offset="0.0415" stop-color="#095762"/><stop offset="0.0830" stop-color="#095863"/><stop offset="0.1245" stop-color="#0a5864"/><stop offset="0.1660" stop-color="#0a5865"/><stop offset="0.2075" stop-color="#0a5865"/><stop offset="0.2490" stop-color="#0a5864"/><stop offset="0.2905" stop-color="#0a5764"/><stop offset="0.3320" stop-color="#0a5764"/><stop offset="0.3735" stop-color="#0b5864"/><stop offset="0.4150" stop-color="#0d5966"/><stop offset="0.4565" stop-color="#0f5b67"/><stop offset="0.4981" stop-color="#105c68"/><stop offset="0.5396" stop-color="#105e69"/><stop offset="0.5811" stop-color="#105f69"/><stop offset="0.6226" stop-color="#106069"/><stop offset="0.6641" stop-color="#0f616a"/><stop offset="0.7056" stop-color="#0f626a"/><stop offset="0.7471" stop-color="#0e656a"/><stop offset="0.7886" stop-color="#0d676b"/><stop offset="0.8301" stop-color="#0c6a6c"/><stop offset="0.8716" stop-color="#0c6d6d"/><stop offset="0.9131" stop-color="#0c6f6e"/><stop offset="0.9546" stop-color="#0c706f"/><stop offset="0.9961" stop-color="#0c7170"/></linearGradient><linearGradient id="r70" x1="0" y1="0" x2="1" y2="0"><stop offset="0.0000" stop-color="#085661"/><stop offset="0.0415" stop-color="#095762"/><stop offset="0.0830" stop-color="#095863"/><stop offset="0.1245" stop-color="#0a5864"/><stop offset="0.1660" stop-color="#0a5865"/><stop offset="0.2075" stop-color="#0a5865"/><stop offset="0.2490" stop-color="#0a5764"/><stop offset="0.2905" stop-color="#0a5763"/><stop offset="0.3320" stop-color="#0a5763"/><stop offset="0.3735" stop-color="#0b5864"/><stop offset="0.4150" stop-color="#0d5965"/><stop offset="0.4565" stop-color="#0f5b67"/><stop offset="0.4981" stop-color="#105c68"/><stop offset="0.5396" stop-color="#115e69"/><stop offset="0.5811" stop-color="#105f69"/><stop offset="0.6226" stop-color="#106069"/><stop offset="0.6641" stop-color="#10616a"/><stop offset="0.7056" stop-color="#0f636a"/><stop offset="0.7471" stop-color="#0e656b"/><stop offset="0.7886" stop-color="#0d676b"/><stop offset="0.8301" stop-color="#0c6a6c"/><stop offset="0.8716" stop-color="#0c6d6d"/><stop offset="0.9131" stop-color="#0c6f6e"/><stop offset="0.9546" stop-color="#0c706f"/><stop offset="0.9961" stop-color="#0c7170"/></linearGradient><linearGradient id="r71" x1="0" y1="0" x2="1" y2="0"><stop offset="0.0000" stop-color="#085660"/><stop offset="0.0415" stop-color="#095762"/><stop offset="0.0830" stop-color="#095763"/><stop offset="0.1245" stop-color="#0a5864"/><stop offset="0.1660" stop-color="#0a5865"/><stop offset="0.2075" stop-color="#0a5864"/><stop offset="0.2490" stop-color="#0a5764"/><stop offset="0.2905" stop-color="#095763"/><stop offset="0.3320" stop-color="#0a5763"/><stop offset="0.3735" stop-color="#0b5764"/><stop offset="0.4150" stop-color="#0d5965"/><stop offset="0.4565" stop-color="#0f5b67"/><stop offset="0.4981" stop-color="#105c68"/><stop offset="0.5396" stop-color="#115e69"/><stop offset="0.5811" stop-color="#115f69"/><stop offset="0.6226" stop-color="#10606a"/><stop offset="0.6641" stop-color="#10616a"/><stop offset="0.7056" stop-color="#0f636a"/><stop offset="0.7471" stop-color="#0e656b"/><stop offset="0.7886" stop-color="#0d686b"/><stop offset="0.8301" stop-color="#0c6b6c"/><stop offset="0.8716" stop-color="#0c6d6d"/><stop offset="0.9131" stop-color="#0c6f6e"/><stop offset="0.9546" stop-color="#0c706f"/><stop offset="0.9961" stop-color="#0c7170"/></linearGradient><linearGradient id="r72" x1="0" y1="0" x2="1" y2="0"><stop offset="0.0000" stop-color="#085660"/><stop offset="0.0415" stop-color="#095662"/><stop offset="0.0830" stop-color="#095763"/><stop offset="0.1245" stop-color="#0a5864"/><stop offset="0.1660" stop-color="#0a5864"/><stop offset="0.2075" stop-color="#0a5764"/><stop offset="0.2490" stop-color="#0a5764"/><stop offset="0.2905" stop-color="#095663"/><stop offset="0.3320" stop-color="#0a5663"/><stop offset="0.3735" stop-color="#0b5764"/><stop offset="0.4150" stop-color="#0d5965"/><stop offset="0.4565" stop-color="#0f5b67"/><stop offset="0.4981" stop-color="#115c68"/><stop offset="0.5396" stop-color="#115e69"/><stop offset="0.5811" stop-color="#115f6a"/><stop offset="0.6226" stop-color="#11606a"/><stop offset="0.6641" stop-color="#10616a"/><stop offset="0.7056" stop-color="#10636a"/><stop offset="0.7471" stop-color="#0f656b"/><stop offset="0.7886" stop-color="#0e686b"/><stop offset="0.8301" stop-color="#0d6b6c"/><stop offset="0.8716" stop-color="#0c6d6d"/><stop offset="0.9131" stop-color="#0c6f6e"/><stop offset="0.9546" stop-color="#0c716f"/><stop offset="0.9961" stop-color="#0c7170"/></linearGradient><linearGradient id="r73" x1="0" y1="0" x2="1" y2="0"><stop offset="0.0000" stop-color="#085560"/><stop offset="0.0415" stop-color="#085662"/><stop offset="0.0830" stop-color="#095763"/><stop offset="0.1245" stop-color="#0a5764"/><stop offset="0.1660" stop-color="#0a5764"/><stop offset="0.2075" stop-color="#0a5764"/><stop offset="0.2490" stop-color="#095663"/><stop offset="0.2905" stop-color="#095663"/><stop offset="0.3320" stop-color="#0a5663"/><stop offset="0.3735" stop-color="#0b5764"/><stop offset="0.4150" stop-color="#0e5965"/><stop offset="0.4565" stop-color="#0f5b67"/><stop offset="0.4981" stop-color="#115c68"/><stop offset="0.5396" stop-color="#115e69"/><stop offset="0.5811" stop-color="#115f6a"/><stop offset="0.6226" stop-color="#11606a"/><stop offset="0.6641" stop-color="#11626a"/><stop offset="0.7056" stop-color="#10636b"/><stop offset="0.7471" stop-color="#0f656b"/><stop offset="0.7886" stop-color="#0e686c"/><stop offset="0.8301" stop-color="#0d6b6d"/><stop offset="0.8716" stop-color="#0c6e6e"/><stop offset="0.9131" stop-color="#0c706f"/><stop offset="0.9546" stop-color="#0b716f"/><stop offset="0.9961" stop-color="#0c7170"/></linearGradient><linearGradient id="r74" x1="0" y1="0" x2="1" y2="0"><stop offset="0.0000" stop-color="#085560"/><stop offset="0.0415" stop-color="#085662"/><stop offset="0.0830" stop-color="#095763"/><stop offset="0.1245" stop-color="#0a5764"/><stop offset="0.1660" stop-color="#0a5764"/><stop offset="0.2075" stop-color="#0a5764"/><stop offset="0.2490" stop-color="#095663"/><stop offset="0.2905" stop-color="#095663"/><stop offset="0.3320" stop-color="#0a5663"/><stop offset="0.3735" stop-color="#0c5764"/><stop offset="0.4150" stop-color="#0e5965"/><stop offset="0.4565" stop-color="#105b67"/><stop offset="0.4981" stop-color="#115c68"/><stop offset="0.5396" stop-color="#125e69"/><stop offset="0.5811" stop-color="#125f6a"/><stop offset="0.6226" stop-color="#11606a"/><stop offset="0.6641" stop-color="#11626a"/><stop offset="0.7056" stop-color="#10636b"/><stop offset="0.7471" stop-color="#0f666b"/><stop offset="0.7886" stop-color="#0e686c"/><stop offset="0.8301" stop-color="#0d6b6d"/><stop offset="0.8716" stop-color="#0c6e6e"/><stop offset="0.9131" stop-color="#0c706f"/><stop offset="0.9546" stop-color="#0b716f"/><stop offset="0.9961" stop-color="#0b7170"/></linearGradient><linearGradient id="r75" x1="0" y1="0" x2="1" y2="0"><stop offset="0.0000" stop-color="#075560"/><stop offset="0.0415" stop-color="#085662"/><stop offset="0.0830" stop-color="#095763"/><stop offset="0.1245" stop-color="#0a5764"/><stop offset="0.1660" stop-color="#0a5764"/><stop offset="0.2075" stop-color="#0a5664"/><stop offset="0.2490" stop-color="#095663"/><stop offset="0.2905" stop-color="#095662"/><stop offset="0.3320" stop-color="#0a5663"/><stop offset="0.3735" stop-color="#0c5764"/><stop offset="0.4150" stop-color="#0e5965"/><stop offset="0.4565" stop-color="#105b67"/><stop offset="0.4981" stop-color="#115d68"/><stop offset="0.5396" stop-color="#125e69"/><stop offset="0.5811" stop-color="#125f6a"/><stop offset="0.6226" stop-color="#12606a"/><stop offset="0.6641" stop-color="#11626a"/><stop offset="0.7056" stop-color="#11646b"/><stop offset="0.7471" stop-color="#0f666b"/><stop offset="0.7886" stop-color="#0e696c"/><stop offset="0.8301" stop-color="#0d6b6d"/><stop offset="0.8716" stop-color="#0c6e6e"/><stop offset="0.9131" stop-color="#0b706f"/><stop offset="0.9546" stop-color="#0b716f"/><stop offset="0.9961" stop-color="#0b7170"/></linearGradient><linearGradient id="r76" x1="0" y1="0" x2="1" y2="0"><stop offset="0.0000" stop-color="#075560"/><stop offset="0.0415" stop-color="#085661"/><stop offset="0.0830" stop-color="#095663"/><stop offset="0.1245" stop-color="#0a5763"/><stop offset="0.1660" stop-color="#0a5764"/><stop offset="0.2075" stop-color="#0a5663"/><stop offset="0.2490" stop-color="#095663"/><stop offset="0.2905" stop-color="#095562"/><stop offset="0.3320" stop-color="#0a5662"/><stop offset="0.3735" stop-color="#0c5764"/><stop offset="0.4150" stop-color="#0e5965"/><stop offset="0.4565" stop-color="#105b67"/><stop offset="0.4981" stop-color="#115d69"/><stop offset="0.5396" stop-color="#125e69"/><stop offset="0.5811" stop-color="#125f6a"/><stop offset="0.6226" stop-color="#12616a"/><stop offset="0.6641" stop-color="#12626b"/><stop offset="0.7056" stop-color="#11646b"/><stop offset="0.7471" stop-color="#10666b"/><stop offset="0.7886" stop-color="#0e696c"/><stop offset="0.8301" stop-color="#0d6c6d"/><stop offset="0.8716" stop-color="#0c6e6e"/><stop offset="0.9131" stop-color="#0b706f"/><stop offset="0.9546" stop-color="#0b716f"/><stop offset="0.9961" stop-color="#0b7170"/></linearGradient><linearGradient id="r77" x1="0" y1="0" x2="1" y2="0"><stop offset="0.0000" stop-color="#075560"/><stop offset="0.0415" stop-color="#085561"/><stop offset="0.0830" stop-color="#095663"/><stop offset="0.1245" stop-color="#0a5763"/><stop offset="0.1660" stop-color="#0a5663"/><stop offset="0.2075" stop-color="#0a5663"/><stop offset="0.2490" stop-color="#095562"/><stop offset="0.2905" stop-color="#095562"/><stop offset="0.3320" stop-color="#0a5562"/><stop offset="0.3735" stop-color="#0c5763"/><stop offset="0.4150" stop-color="#0e5865"/><stop offset="0.4565" stop-color="#105b67"/><stop offset="0.4981" stop-color="#125d69"/><stop offset="0.5396" stop-color="#125e6a"/><stop offset="0.5811" stop-color="#125f6a"/><stop offset="0.6226" stop-color="#12616a"/><stop offset="0.6641" stop-color="#12626b"/><stop offset="0.7056" stop-color="#11646b"/><stop offset="0.7471" stop-color="#10666b"/><stop offset="0.7886" stop-color="#0f696c"/><stop offset="0.8301" stop-color="#0d6c6d"/><stop offset="0.8716" stop-color="#0c6e6e"/><stop offset="0.9131" stop-color="#0b706f"/><stop offset="0.9546" stop-color="#0b716f"/><stop offset="0.9961" stop-color="#0b716f"/></linearGradient><linearGradient id="r78" x1="0" y1="0" x2="1" y2="0"><stop offset="0.0000" stop-color="#075460"/><stop offset="0.0415" stop-color="#085561"/><stop offset="0.0830" stop-color="#095662"/><stop offset="0.1245" stop-color="#0a5663"/><stop offset="0.1660" stop-color="#0a5663"/><stop offset="0.2075" stop-color="#095663"/><stop offset="0.2490" stop-color="#095562"/><stop offset="0.2905" stop-color="#095562"/><stop offset="0.3320" stop-color="#0a5562"/><stop offset="0.3735" stop-color="#0c5763"/><stop offset="0.4150" stop-color="#0e5865"/><stop offset="0.4565" stop-color="#105b67"/><stop offset="0.4981" stop-color="#125d69"/><stop offset="0.5396" stop-color="#135e6a"/><stop offset="0.5811" stop-color="#13606a"/><stop offset="0.6226" stop-color="#13616b"/><stop offset="0.6641" stop-color="#12626b"/><stop offset="0.7056" stop-color="#11646b"/><stop offset="0.7471" stop-color="#10666c"/><stop offset="0.7886" stop-color="#0f696c"/><stop offset="0.8301" stop-color="#0d6c6d"/><stop offset="0.8716" stop-color="#0c6e6e"/><stop offset="0.9131" stop-color="#0b706f"/><stop offset="0.9546" stop-color="#0b716f"/><stop offset="0.9961" stop-color="#0b716f"/></linearGradient><linearGradient id="r79" x1="0" y1="0" x2="1" y2="0"><stop offset="0.0000" stop-color="#075460"/><stop offset="0.0415" stop-color="#085561"/><stop offset="0.0830" stop-color="#095662"/><stop offset="0.1245" stop-color="#0a5663"/><stop offset="0.1660" stop-color="#0a5663"/><stop offset="0.2075" stop-color="#095563"/><stop offset="0.2490" stop-color="#095562"/><stop offset="0.2905" stop-color="#095562"/><stop offset="0.3320" stop-color="#0a5562"/><stop offset="0.3735" stop-color="#0c5663"/><stop offset="0.4150" stop-color="#0e5865"/><stop offset="0.4565" stop-color="#105b67"/><stop offset="0.4981" stop-color="#125d69"/><stop offset="0.5396" stop-color="#135e6a"/><stop offset="0.5811" stop-color="#13606a"/><stop offset="0.6226" stop-color="#13616b"/><stop offset="0.6641" stop-color="#13626b"/><stop offset="0.7056" stop-color="#12646b"/><stop offset="0.7471" stop-color="#11676c"/><stop offset="0.7886" stop-color="#0f696c"/><stop offset="0.8301" stop-color="#0d6c6d"/><stop offset="0.8716" stop-color="#0c6e6e"/><stop offset="0.9131" stop-color="#0b706f"/><stop offset="0.9546" stop-color="#0b706f"/><stop offset="0.9961" stop-color="#0b706f"/></linearGradient><linearGradient id="r80" x1="0" y1="0" x2="1" y2="0"><stop offset="0.0000" stop-color="#075460"/><stop offset="0.0415" stop-color="#085561"/><stop offset="0.0830" stop-color="#095662"/><stop offset="0.1245" stop-color="#0a5663"/><stop offset="0.1660" stop-color="#0a5663"/><stop offset="0.2075" stop-color="#095562"/><stop offset="0.2490" stop-color="#095562"/><stop offset="0.2905" stop-color="#095461"/><stop offset="0.3320" stop-color="#0a5562"/><stop offset="0.3735" stop-color="#0c5663"/><stop offset="0.4150" stop-color="#0e5865"/><stop offset="0.4565" stop-color="#105b67"/><stop offset="0.4981" stop-color="#125d69"/><stop offset="0.5396" stop-color="#135e6a"/><stop offset="0.5811" stop-color="#13606a"/><stop offset="0.6226" stop-color="#13616b"/><stop offset="0.6641" stop-color="#13626b"/><stop offset="0.7056" stop-color="#12646b"/><stop offset="0.7471" stop-color="#11676c"/><stop offset="0.7886" stop-color="#0f696c"/><stop offset="0.8301" stop-color="#0d6c6d"/><stop offset="0.8716" stop-color="#0c6e6e"/><stop offset="0.9131" stop-color="#0b706f"/><stop offset="0.9546" stop-color="#0b706f"/><stop offset="0.9961" stop-color="#0b706f"/></linearGradient><linearGradient id="r81" x1="0" y1="0" x2="1" y2="0"><stop offset="0.0000" stop-color="#075460"/><stop offset="0.0415" stop-color="#085561"/><stop offset="0.0830" stop-color="#095562"/><stop offset="0.1245" stop-color="#095663"/><stop offset="0.1660" stop-color="#095563"/><stop offset="0.2075" stop-color="#095562"/><stop offset="0.2490" stop-color="#095462"/><stop offset="0.2905" stop-color="#095461"/><stop offset="0.3320" stop-color="#0a5562"/><stop offset="0.3735" stop-color="#0c5663"/><stop offset="0.4150" stop-color="#0e5865"/><stop offset="0.4565" stop-color="#105a67"/><stop offset="0.4981" stop-color="#125d69"/><stop offset="0.5396" stop-color="#135e6a"/><stop offset="0.5811" stop-color="#14606b"/><stop offset="0.6226" stop-color="#13616b"/><stop offset="0.6641" stop-color="#13636b"/><stop offset="0.7056" stop-color="#12646c"/><stop offset="0.7471" stop-color="#11676c"/><stop offset="0.7886" stop-color="#0f6a6c"/><stop offset="0.8301" stop-color="#0e6c6d"/><stop offset="0.8716" stop-color="#0c6e6e"/><stop offset="0.9131" stop-color="#0b706e"/><stop offset="0.9546" stop-color="#0b706f"/><stop offset="0.9961" stop-color="#0b706f"/></linearGradient><linearGradient id="r82" x1="0" y1="0" x2="1" y2="0"><stop offset="0.0000" stop-color="#075460"/><stop offset="0.0415" stop-color="#085561"/><stop offset="0.0830" stop-color="#095562"/><stop offset="0.1245" stop-color="#095563"/><stop offset="0.1660" stop-color="#095563"/><stop offset="0.2075" stop-color="#095562"/><stop offset="0.2490" stop-color="#095461"/><stop offset="0.2905" stop-color="#095461"/><stop offset="0.3320" stop-color="#0a5562"/><stop offset="0.3735" stop-color="#0c5663"/><stop offset="0.4150" stop-color="#0e5865"/><stop offset="0.4565" stop-color="#115a67"/><stop offset="0.4981" stop-color="#125d69"/><stop offset="0.5396" stop-color="#135e6a"/><stop offset="0.5811" stop-color="#14606b"/><stop offset="0.6226" stop-color="#14616b"/><stop offset="0.6641" stop-color="#13636b"/><stop offset="0.7056" stop-color="#13656c"/><stop offset="0.7471" stop-color="#11676c"/><stop offset="0.7886" stop-color="#106a6d"/><stop offset="0.8301" stop-color="#0e6c6d"/><stop offset="0.8716" stop-color="#0c6e6e"/><stop offset="0.9131" stop-color="#0b706e"/><stop offset="0.9546" stop-color="#0b706f"/><stop offset="0.9961" stop-color="#0a706f"/></linearGradient><linearGradient id="r83" x1="0" y1="0" x2="1" y2="0"><stop offset="0.0000" stop-color="#075460"/><stop offset="0.0415" stop-color="#085461"/><stop offset="0.0830" stop-color="#095562"/><stop offset="0.1245" stop-color="#095562"/><stop offset="0.1660" stop-color="#095562"/><stop offset="0.2075" stop-color="#095462"/><stop offset="0.2490" stop-color="#095461"/><stop offset="0.2905" stop-color="#095461"/><stop offset="0.3320" stop-color="#0a5461"/><stop offset="0.3735" stop-color="#0c5663"/><stop offset="0.4150" stop-color="#0e5865"/><stop offset="0.4565" stop-color="#115a67"/><stop offset="0.4981" stop-color="#135d69"/><stop offset="0.5396" stop-color="#145e6a"/><stop offset="0.5811" stop-color="#14606b"/><stop offset="0.6226" stop-color="#14616b"/><stop offset="0.6641" stop-color="#14636b"/><stop offset="0.7056" stop-color="#13656c"/><stop offset="0.7471" stop-color="#12676c"/><stop offset="0.7886" stop-color="#106a6d"/><stop offset="0.8301" stop-color="#0e6c6d"/><stop offset="0.8716" stop-color="#0c6e6e"/><stop offset="0.9131" stop-color="#0b706e"/><stop offset="0.9546" stop-color="#0b706f"/><stop offset="0.9961" stop-color="#0a706f"/></linearGradient><linearGradient id="r84" x1="0" y1="0" x2="1" y2="0"><stop offset="0.0000" stop-color="#075460"/><stop offset="0.0415" stop-color="#085461"/><stop offset="0.0830" stop-color="#095562"/><stop offset="0.1245" stop-color="#095562"/><stop offset="0.1660" stop-color="#095562"/><stop offset="0.2075" stop-color="#095462"/><stop offset="0.2490" stop-color="#085461"/><stop offset="0.2905" stop-color="#095461"/><stop offset="0.3320" stop-color="#0a5461"/><stop offset="0.3735" stop-color="#0c5663"/><stop offset="0.4150" stop-color="#0e5865"/><stop offset="0.4565" stop-color="#115a67"/><stop offset="0.4981" stop-color="#135d69"/><stop offset="0.5396" stop-color="#145e6a"/><stop offset="0.5811" stop-color="#14606b"/><stop offset="0.6226" stop-color="#14616b"/><stop offset="0.6641" stop-color="#14636c"/><stop offset="0.7056" stop-color="#13656c"/><stop offset="0.7471" stop-color="#12676c"/><stop offset="0.7886" stop-color="#106a6d"/><stop offset="0.8301" stop-color="#0e6c6d"/><stop offset="0.8716" stop-color="#0c6e6e"/><stop offset="0.9131" stop-color="#0b6f6e"/><stop offset="0.9546" stop-color="#0a706e"/><stop offset="0.9961" stop-color="#0a6f6e"/></linearGradient><linearGradient id="r85" x1="0" y1="0" x2="1" y2="0"><stop offset="0.0000" stop-color="#075360"/><stop offset="0.0415" stop-color="#085461"/><stop offset="0.0830" stop-color="#095562"/><stop offset="0.1245" stop-color="#095562"/><stop offset="0.1660" stop-color="#095562"/><stop offset="0.2075" stop-color="#095461"/><stop offset="0.2490" stop-color="#085361"/><stop offset="0.2905" stop-color="#085360"/><stop offset="0.3320" stop-color="#0a5461"/><stop offset="0.3735" stop-color="#0c5663"/><stop offset="0.4150" stop-color="#0e5865"/><stop offset="0.4565" stop-color="#115a67"/><stop offset="0.4981" stop-color="#135d69"/><stop offset="0.5396" stop-color="#145e6a"/><stop offset="0.5811" stop-color="#15606b"/><stop offset="0.6226" stop-color="#15616b"/><stop offset="0.6641" stop-color="#14636c"/><stop offset="0.7056" stop-color="#14656c"/><stop offset="0.7471" stop-color="#12676c"/><stop offset="0.7886" stop-color="#106a6d"/><stop offset="0.8301" stop-color="#0e6c6d"/><stop offset="0.8716" stop-color="#0c6e6e"/><stop offset="0.9131" stop-color="#0b6f6e"/><stop offset="0.9546" stop-color="#0a6f6e"/><stop offset="0.9961" stop-color="#0a6f6e"/></linearGradient><linearGradient id="r86" x1="0" y1="0" x2="1" y2="0"><stop offset="0.0000" stop-color="#075360"/><stop offset="0.0415" stop-color="#085461"/><stop offset="0.0830" stop-color="#095561"/><stop offset="0.1245" stop-color="#095562"/><stop offset="0.1660" stop-color="#095462"/><stop offset="0.2075" stop-color="#095461"/><stop offset="0.2490" stop-color="#085360"/><stop offset="0.2905" stop-color="#085360"/><stop offset="0.3320" stop-color="#0a5461"/><stop offset="0.3735" stop-color="#0c5663"/><stop offset="0.4150" stop-color="#0e5865"/><stop offset="0.4565" stop-color="#115a67"/><stop offset="0.4981" stop-color="#135d69"/><stop offset="0.5396" stop-color="#145e6a"/><stop offset="0.5811" stop-color="#15606b"/><stop offset="0.6226" stop-color="#15616b"/><stop offset="0.6641" stop-color="#15636c"/><stop offset="0.7056" stop-color="#14656c"/><stop offset="0.7471" stop-color="#12676c"/><stop offset="0.7886" stop-color="#106a6d"/><stop offset="0.8301" stop-color="#0e6c6d"/><stop offset="0.8716" stop-color="#0c6e6e"/><stop offset="0.9131" stop-color="#0b6f6e"/><stop offset="0.9546" stop-color="#0a6f6e"/><stop offset="0.9961" stop-color="#0a6f6e"/></linearGradient><linearGradient id="r87" x1="0" y1="0" x2="1" y2="0"><stop offset="0.0000" stop-color="#075360"/><stop offset="0.0415" stop-color="#085461"/><stop offset="0.0830" stop-color="#085461"/><stop offset="0.1245" stop-color="#095562"/><stop offset="0.1660" stop-color="#095462"/><stop offset="0.2075" stop-color="#085461"/><stop offset="0.2490" stop-color="#085360"/><stop offset="0.2905" stop-color="#085360"/><stop offset="0.3320" stop-color="#095461"/><stop offset="0.3735" stop-color="#0c5662"/><stop offset="0.4150" stop-color="#0e5865"/><stop offset="0.4565" stop-color="#115a67"/><stop offset="0.4981" stop-color="#135d69"/><stop offset="0.5396" stop-color="#145e6a"/><stop offset="0.5811" stop-color="#15606b"/><stop offset="0.6226" stop-color="#15616c"/><stop offset="0.6641" stop-color="#15636c"/><stop offset="0.7056" stop-color="#14656c"/><stop offset="0.7471" stop-color="#13676d"/><stop offset="0.7886" stop-color="#116a6d"/><stop offset="0.8301" stop-color="#0e6c6d"/><stop offset="0.8716" stop-color="#0c6e6e"/><stop offset="0.9131" stop-color="#0b6f6e"/><stop offset="0.9546" stop-color="#0a6f6e"/><stop offset="0.9961" stop-color="#0a6f6e"/></linearGradient><linearGradient id="r88" x1="0" y1="0" x2="1" y2="0"><stop offset="0.0000" stop-color="#075360"/><stop offset="0.0415" stop-color="#085460"/><stop offset="0.0830" stop-color="#085461"/><stop offset="0.1245" stop-color="#095462"/><stop offset="0.1660" stop-color="#095461"/><stop offset="0.2075" stop-color="#085361"/><stop offset="0.2490" stop-color="#085360"/><stop offset="0.2905" stop-color="#085360"/><stop offset="0.3320" stop-color="#095461"/><stop offset="0.3735" stop-color="#0c5562"/><stop offset="0.4150" stop-color="#0e5865"/><stop offset="0.4565" stop-color="#115a67"/><stop offset="0.4981" stop-color="#135d69"/><stop offset="0.5396" stop-color="#155e6a"/><stop offset="0.5811" stop-color="#15606b"/><stop offset="0.6226" stop-color="#15626c"/><stop offset="0.6641" stop-color="#15636c"/><stop offset="0.7056" stop-color="#15656c"/><stop offset="0.7471" stop-color="#13676d"/><stop offset="0.7886" stop-color="#116a6d"/><stop offset="0.8301" stop-color="#0e6c6d"/><stop offset="0.8716" stop-color="#0c6e6e"/><stop offset="0.9131" stop-color="#0b6f6e"/><stop offset="0.9546" stop-color="#0a6f6e"/><stop offset="0.9961" stop-color="#0a6e6e"/></linearGradient><linearGradient id="r89" x1="0" y1="0" x2="1" y2="0"><stop offset="0.0000" stop-color="#07535f"/><stop offset="0.0415" stop-color="#085460"/><stop offset="0.0830" stop-color="#085461"/><stop offset="0.1245" stop-color="#095461"/><stop offset="0.1660" stop-color="#095461"/><stop offset="0.2075" stop-color="#085360"/><stop offset="0.2490" stop-color="#085360"/><stop offset="0.2905" stop-color="#085360"/><stop offset="0.3320" stop-color="#095461"/><stop offset="0.3735" stop-color="#0c5562"/><stop offset="0.4150" stop-color="#0f5865"/><stop offset="0.4565" stop-color="#115a67"/><stop offset="0.4981" stop-color="#135d69"/><stop offset="0.5396" stop-color="#155e6a"/><stop offset="0.5811" stop-color="#15606b"/><stop offset="0.6226" stop-color="#16626c"/><stop offset="0.6641" stop-color="#16636c"/><stop offset="0.7056" stop-color="#15656c"/><stop offset="0.7471" stop-color="#13676d"/><stop offset="0.7886" stop-color="#116a6d"/><stop offset="0.8301" stop-color="#0e6c6d"/><stop offset="0.8716" stop-color="#0c6e6e"/><stop offset="0.9131" stop-color="#0b6f6e"/><stop offset="0.9546" stop-color="#0a6f6e"/><stop offset="0.9961" stop-color="#096e6d"/></linearGradient><linearGradient id="r90" x1="0" y1="0" x2="1" y2="0"><stop offset="0.0000" stop-color="#07535f"/><stop offset="0.0415" stop-color="#085460"/><stop offset="0.0830" stop-color="#085461"/><stop offset="0.1245" stop-color="#095461"/><stop offset="0.1660" stop-color="#085461"/><stop offset="0.2075" stop-color="#085360"/><stop offset="0.2490" stop-color="#085260"/><stop offset="0.2905" stop-color="#08535f"/><stop offset="0.3320" stop-color="#095360"/><stop offset="0.3735" stop-color="#0c5562"/><stop offset="0.4150" stop-color="#0f5865"/><stop offset="0.4565" stop-color="#115a67"/><stop offset="0.4981" stop-color="#145d69"/><stop offset="0.5396" stop-color="#155e6a"/><stop offset="0.5811" stop-color="#16606b"/><stop offset="0.6226" stop-color="#16626c"/><stop offset="0.6641" stop-color="#16636c"/><stop offset="0.7056" stop-color="#15656c"/><stop offset="0.7471" stop-color="#14686d"/><stop offset="0.7886" stop-color="#116a6d"/><stop offset="0.8301" stop-color="#0e6c6d"/><stop offset="0.8716" stop-color="#0c6e6d"/><stop offset="0.9131" stop-color="#0b6e6e"/><stop offset="0.9546" stop-color="#0a6e6d"/><stop offset="0.9961" stop-color="#096e6d"/></linearGradient><linearGradient id="r91" x1="0" y1="0" x2="1" y2="0"><stop offset="0.0000" stop-color="#07535f"/><stop offset="0.0415" stop-color="#085360"/><stop offset="0.0830" stop-color="#085461"/><stop offset="0.1245" stop-color="#085461"/><stop offset="0.1660" stop-color="#085361"/><stop offset="0.2075" stop-color="#085360"/><stop offset="0.2490" stop-color="#08525f"/><stop offset="0.2905" stop-color="#08525f"/><stop offset="0.3320" stop-color="#095360"/><stop offset="0.3735" stop-color="#0c5562"/><stop offset="0.4150" stop-color="#0f5864"/><stop offset="0.4565" stop-color="#115a67"/><stop offset="0.4981" stop-color="#145d69"/><stop offset="0.5396" stop-color="#155e6a"/><stop offset="0.5811" stop-color="#16606b"/><stop offset="0.6226" stop-color="#16626c"/><stop offset="0.6641" stop-color="#16636c"/><stop offset="0.7056" stop-color="#15656d"/><stop offset="0.7471" stop-color="#14686d"/><stop offset="0.7886" stop-color="#116a6d"/><stop offset="0.8301" stop-color="#0f6c6d"/><stop offset="0.8716" stop-color="#0c6e6d"/><stop offset="0.9131" stop-color="#0a6e6d"/><stop offset="0.9546" stop-color="#0a6e6d"/><stop offset="0.9961" stop-color="#096d6d"/></linearGradient><linearGradient id="r92" x1="0" y1="0" x2="1" y2="0"><stop offset="0.0000" stop-color="#07535f"/><stop offset="0.0415" stop-color="#075360"/><stop offset="0.0830" stop-color="#085461"/><stop offset="0.1245" stop-color="#085461"/><stop offset="0.1660" stop-color="#085361"/><stop offset="0.2075" stop-color="#085360"/><stop offset="0.2490" stop-color="#07525f"/><stop offset="0.2905" stop-color="#08525f"/><stop offset="0.3320" stop-color="#095360"/><stop offset="0.3735" stop-color="#0c5562"/><stop offset="0.4150" stop-color="#0f5864"/><stop offset="0.4565" stop-color="#125a67"/><stop offset="0.4981" stop-color="#145d69"/><stop offset="0.5396" stop-color="#155e6b"/><stop offset="0.5811" stop-color="#16606b"/><stop offset="0.6226" stop-color="#17626c"/><stop offset="0.6641" stop-color="#16636c"/><stop offset="0.7056" stop-color="#16656d"/><stop offset="0.7471" stop-color="#14686d"/><stop offset="0.7886" stop-color="#126a6d"/><stop offset="0.8301" stop-color="#0f6c6d"/><stop offset="0.8716" stop-color="#0c6e6d"/><stop offset="0.9131" stop-color="#0a6e6d"/><stop offset="0.9546" stop-color="#096e6d"/><stop offset="0.9961" stop-color="#096d6d"/></linearGradient><linearGradient id="r93" x1="0" y1="0" x2="1" y2="0"><stop offset="0.0000" stop-color="#07535f"/><stop offset="0.0415" stop-color="#075360"/><stop offset="0.0830" stop-color="#085461"/><stop offset="0.1245" stop-color="#085361"/><stop offset="0.1660" stop-color="#085360"/><stop offset="0.2075" stop-color="#085260"/><stop offset="0.2490" stop-color="#07525f"/><stop offset="0.2905" stop-color="#08525f"/><stop offset="0.3320" stop-color="#095360"/><stop offset="0.3735" stop-color="#0c5562"/><stop offset="0.4150" stop-color="#0f5764"/><stop offset="0.4565" stop-color="#125a67"/><stop offset="0.4981" stop-color="#145c69"/><stop offset="0.5396" stop-color="#155e6b"/><stop offset="0.5811" stop-color="#16606b"/><stop offset="0.6226" stop-color="#17626c"/><stop offset="0.6641" stop-color="#17636c"/><stop offset="0.7056" stop-color="#16656d"/><stop offset="0.7471" stop-color="#14686d"/><stop offset="0.7886" stop-color="#126a6d"/><stop offset="0.8301" stop-color="#0f6c6d"/><stop offset="0.8716" stop-color="#0c6d6d"/><stop offset="0.9131" stop-color="#0a6e6d"/><stop offset="0.9546" stop-color="#096d6d"/><stop offset="0.9961" stop-color="#096d6d"/></linearGradient><linearGradient id="r94" x1="0" y1="0" x2="1" y2="0"><stop offset="0.0000" stop-color="#07535f"/><stop offset="0.0415" stop-color="#075360"/><stop offset="0.0830" stop-color="#085361"/><stop offset="0.1245" stop-color="#085361"/><stop offset="0.1660" stop-color="#085360"/><stop offset="0.2075" stop-color="#07525f"/><stop offset="0.2490" stop-color="#07525f"/><stop offset="0.2905" stop-color="#08525f"/><stop offset="0.3320" stop-color="#095360"/><stop offset="0.3735" stop-color="#0c5562"/><stop offset="0.4150" stop-color="#0f5764"/><stop offset="0.4565" stop-color="#125a67"/><stop offset="0.4981" stop-color="#145c69"/><stop offset="0.5396" stop-color="#165e6b"/><stop offset="0.5811" stop-color="#17606c"/><stop offset="0.6226" stop-color="#17626c"/><stop offset="0.6641" stop-color="#17636d"/><stop offset="0.7056" stop-color="#16656d"/><stop offset="0.7471" stop-color="#15686d"/><stop offset="0.7886" stop-color="#126a6d"/><stop offset="0.8301" stop-color="#0f6c6d"/><stop offset="0.8716" stop-color="#0c6d6d"/><stop offset="0.9131" stop-color="#0a6e6d"/><stop offset="0.9546" stop-color="#096d6d"/><stop offset="0.9961" stop-color="#096c6c"/></linearGradient><linearGradient id="r95" x1="0" y1="0" x2="1" y2="0"><stop offset="0.0000" stop-color="#07525f"/><stop offset="0.0415" stop-color="#075360"/><stop offset="0.0830" stop-color="#085360"/><stop offset="0.1245" stop-color="#085360"/><stop offset="0.1660" stop-color="#085360"/><stop offset="0.2075" stop-color="#07525f"/><stop offset="0.2490" stop-color="#07515f"/><stop offset="0.2905" stop-color="#08525f"/><stop offset="0.3320" stop-color="#095360"/><stop offset="0.3735" stop-color="#0c5562"/><stop offset="0.4150" stop-color="#0f5764"/><stop offset="0.4565" stop-color="#125a67"/><stop offset="0.4981" stop-color="#145c69"/><stop offset="0.5396" stop-color="#165e6b"/><stop offset="0.5811" stop-color="#17606c"/><stop offset="0.6226" stop-color="#17626c"/><stop offset="0.6641" stop-color="#17636d"/><stop offset="0.7056" stop-color="#17656d"/><stop offset="0.7471" stop-color="#15686d"/><stop offset="0.7886" stop-color="#126a6d"/><stop offset="0.8301" stop-color="#0f6c6d"/><stop offset="0.8716" stop-color="#0c6d6d"/><stop offset="0.9131" stop-color="#0a6d6d"/><stop offset="0.9546" stop-color="#096d6c"/><stop offset="0.9961" stop-color="#086c6c"/></linearGradient><linearGradient id="r96" x1="0" y1="0" x2="1" y2="0"><stop offset="0.0000" stop-color="#07525f"/><stop offset="0.0415" stop-color="#075360"/><stop offset="0.0830" stop-color="#085360"/><stop offset="0.1245" stop-color="#085360"/><stop offset="0.1660" stop-color="#085260"/><stop offset="0.2075" stop-color="#07525f"/><stop offset="0.2490" stop-color="#07515e"/><stop offset="0.2905" stop-color="#08525e"/><stop offset="0.3320" stop-color="#095360"/><stop offset="0.3735" stop-color="#0c5562"/><stop offset="0.4150" stop-color="#0f5764"/><stop offset="0.4565" stop-color="#125a67"/><stop offset="0.4981" stop-color="#145c69"/><stop offset="0.5396" stop-color="#165e6b"/><stop offset="0.5811" stop-color="#17606c"/><stop offset="0.6226" stop-color="#17626c"/><stop offset="0.6641" stop-color="#18646d"/><stop offset="0.7056" stop-color="#17656d"/><stop offset="0.7471" stop-color="#15686d"/><stop offset="0.7886" stop-color="#126a6d"/><stop offset="0.8301" stop-color="#0f6c6d"/><stop offset="0.8716" stop-color="#0c6d6d"/><stop offset="0.9131" stop-color="#0a6d6d"/><stop offset="0.9546" stop-color="#096c6c"/><stop offset="0.9961" stop-color="#086c6c"/></linearGradient><linearGradient id="band" gradientUnits="userSpaceOnUse" x1="349" y1="26" x2="620" y2="325"><stop offset="0" stop-color="#ffffff" stop-opacity="0.05"/><stop offset="1" stop-color="#ffffff" stop-opacity="0"/></linearGradient><linearGradient id="wedgeL" gradientUnits="userSpaceOnUse" x1="132" y1="0" x2="400" y2="0"><stop offset="0" stop-color="#13807a" stop-opacity="0.25"/><stop offset="1" stop-color="#13807a" stop-opacity="0.45"/></linearGradient><linearGradient id="wedgeR" gradientUnits="userSpaceOnUse" x1="1520" y1="470" x2="1480" y2="620"><stop offset="0" stop-color="#12907f" stop-opacity="0.2"/><stop offset="1" stop-color="#12907f" stop-opacity="0"/></linearGradient></defs><g shape-rendering="crispEdges"><rect x="0" y="0" width="1542" height="8" fill="url(#r0)"/><rect x="0" y="8" width="1542" height="8" fill="url(#r1)"/><rect x="0" y="16" width="1542" height="8" fill="url(#r2)"/><rect x="0" y="24" width="1542" height="8" fill="url(#r3)"/><rect x="0" y="32" width="1542" height="8" fill="url(#r4)"/><rect x="0" y="40" width="1542" height="8" fill="url(#r5)"/><rect x="0" y="48" width="1542" height="8" fill="url(#r6)"/><rect x="0" y="56" width="1542" height="8" fill="url(#r7)"/><rect x="0" y="64" width="1542" height="8" fill="url(#r8)"/><rect x="0" y="72" width="1542" height="8" fill="url(#r9)"/><rect x="0" y="80" width="1542" height="8" fill="url(#r10)"/><rect x="0" y="88" width="1542" height="8" fill="url(#r11)"/><rect x="0" y="96" width="1542" height="8" fill="url(#r12)"/><rect x="0" y="104" width="1542" height="8" fill="url(#r13)"/><rect x="0" y="112" width="1542" height="8" fill="url(#r14)"/><rect x="0" y="120" width="1542" height="8" fill="url(#r15)"/><rect x="0" y="128" width="1542" height="8" fill="url(#r16)"/><rect x="0" y="136" width="1542" height="8" fill="url(#r17)"/><rect x="0" y="144" width="1542" height="8" fill="url(#r18)"/><rect x="0" y="152" width="1542" height="8" fill="url(#r19)"/><rect x="0" y="160" width="1542" height="8" fill="url(#r20)"/><rect x="0" y="168" width="1542" height="8" fill="url(#r21)"/><rect x="0" y="176" width="1542" height="8" fill="url(#r22)"/><rect x="0" y="184" width="1542" height="8" fill="url(#r23)"/><rect x="0" y="192" width="1542" height="8" fill="url(#r24)"/><rect x="0" y="200" width="1542" height="8" fill="url(#r25)"/><rect x="0" y="208" width="1542" height="8" fill="url(#r26)"/><rect x="0" y="216" width="1542" height="8" fill="url(#r27)"/><rect x="0" y="224" width="1542" height="8" fill="url(#r28)"/><rect x="0" y="232" width="1542" height="8" fill="url(#r29)"/><rect x="0" y="240" width="1542" height="8" fill="url(#r30)"/><rect x="0" y="248" width="1542" height="8" fill="url(#r31)"/><rect x="0" y="256" width="1542" height="8" fill="url(#r32)"/><rect x="0" y="264" width="1542" height="8" fill="url(#r33)"/><rect x="0" y="272" width="1542" height="8" fill="url(#r34)"/><rect x="0" y="280" width="1542" height="8" fill="url(#r35)"/><rect x="0" y="288" width="1542" height="8" fill="url(#r36)"/><rect x="0" y="296" width="1542" height="8" fill="url(#r37)"/><rect x="0" y="304" width="1542" height="8" fill="url(#r38)"/><rect x="0" y="312" width="1542" height="8" fill="url(#r39)"/><rect x="0" y="320" width="1542" height="8" fill="url(#r40)"/><rect x="0" y="328" width="1542" height="8" fill="url(#r41)"/><rect x="0" y="336" width="1542" height="8" fill="url(#r42)"/><rect x="0" y="344" width="1542" height="8" fill="url(#r43)"/><rect x="0" y="352" width="1542" height="8" fill="url(#r44)"/><rect x="0" y="360" width="1542" height="8" fill="url(#r45)"/><rect x="0" y="368" width="1542" height="8" fill="url(#r46)"/><rect x="0" y="376" width="1542" height="8" fill="url(#r47)"/><rect x="0" y="384" width="1542" height="8" fill="url(#r48)"/><rect x="0" y="392" width="1542" height="8" fill="url(#r49)"/><rect x="0" y="400" width="1542" height="8" fill="url(#r50)"/><rect x="0" y="408" width="1542" height="8" fill="url(#r51)"/><rect x="0" y="416" width="1542" height="8" fill="url(#r52)"/><rect x="0" y="424" width="1542" height="8" fill="url(#r53)"/><rect x="0" y="432" width="1542" height="8" fill="url(#r54)"/><rect x="0" y="440" width="1542" height="8" fill="url(#r55)"/><rect x="0" y="448" width="1542" height="8" fill="url(#r56)"/><rect x="0" y="456" width="1542" height="8" fill="url(#r57)"/><rect x="0" y="464" width="1542" height="8" fill="url(#r58)"/><rect x="0" y="472" width="1542" height="8" fill="url(#r59)"/><rect x="0" y="480" width="1542" height="8" fill="url(#r60)"/><rect x="0" y="488" width="1542" height="8" fill="url(#r61)"/><rect x="0" y="496" width="1542" height="8" fill="url(#r62)"/><rect x="0" y="504" width="1542" height="8" fill="url(#r63)"/><rect x="0" y="512" width="1542" height="8" fill="url(#r64)"/><rect x="0" y="520" width="1542" height="8" fill="url(#r65)"/><rect x="0" y="528" width="1542" height="8" fill="url(#r66)"/><rect x="0" y="536" width="1542" height="8" fill="url(#r67)"/><rect x="0" y="544" width="1542" height="8" fill="url(#r68)"/><rect x="0" y="552" width="1542" height="8" fill="url(#r69)"/><rect x="0" y="560" width="1542" height="8" fill="url(#r70)"/><rect x="0" y="568" width="1542" height="8" fill="url(#r71)"/><rect x="0" y="576" width="1542" height="8" fill="url(#r72)"/><rect x="0" y="584" width="1542" height="8" fill="url(#r73)"/><rect x="0" y="592" width="1542" height="8" fill="url(#r74)"/><rect x="0" y="600" width="1542" height="8" fill="url(#r75)"/><rect x="0" y="608" width="1542" height="8" fill="url(#r76)"/><rect x="0" y="616" width="1542" height="8" fill="url(#r77)"/><rect x="0" y="624" width="1542" height="8" fill="url(#r78)"/><rect x="0" y="632" width="1542" height="8" fill="url(#r79)"/><rect x="0" y="640" width="1542" height="8" fill="url(#r80)"/><rect x="0" y="648" width="1542" height="8" fill="url(#r81)"/><rect x="0" y="656" width="1542" height="8" fill="url(#r82)"/><rect x="0" y="664" width="1542" height="8" fill="url(#r83)"/><rect x="0" y="672" width="1542" height="8" fill="url(#r84)"/><rect x="0" y="680" width="1542" height="8" fill="url(#r85)"/><rect x="0" y="688" width="1542" height="8" fill="url(#r86)"/><rect x="0" y="696" width="1542" height="8" fill="url(#r87)"/><rect x="0" y="704" width="1542" height="8" fill="url(#r88)"/><rect x="0" y="712" width="1542" height="8" fill="url(#r89)"/><rect x="0" y="720" width="1542" height="8" fill="url(#r90)"/><rect x="0" y="728" width="1542" height="8" fill="url(#r91)"/><rect x="0" y="736" width="1542" height="8" fill="url(#r92)"/><rect x="0" y="744" width="1542" height="8" fill="url(#r93)"/><rect x="0" y="752" width="1542" height="8" fill="url(#r94)"/><rect x="0" y="760" width="1542" height="8" fill="url(#r95)"/><rect x="0" y="768" width="1542" height="8" fill="url(#r96)"/></g><path d="M349,26 L70,282 L1600,560 L1600,26 Z" fill="url(#band)"/><path d="M132,437 L420,406 L420,528 Z" fill="url(#wedgeL)"/><path d="M1068,757 L1542,697 L1542,770 L1180,770 Z" fill="#ffffff" fill-opacity="0.035"/><path d="M1542,423 L1489,514 L1440,660 L1542,660 Z" fill="url(#wedgeR)"/></svg>
<div class="a" style="left:0;top:27px;width:1542px;height:7px;background:linear-gradient(rgba(0,20,30,0.45),rgba(0,20,30,0));"></div>
<div class="a" style="left:0;top:0;width:1542px;height:25px;background:#f6f5f4;"></div>
<div class="a" style="left:0;top:25px;width:1542px;height:1px;background:#fbfafa;"></div>
<div class="a" style="left:0;top:26px;width:1542px;height:1px;background:#a69d95;"></div>
<div class="a" style="left:110px;top:0;width:200px;height:25.6px;background:#dbd7d4;border-radius:4px;"></div>
<div class="t" style="left:19.7px;transform-origin:0 0;top:5.13px;font-size:13.996500000000001px;line-height:15.63px;color:#363636;transform:scaleX(1.0476190476190477);">Applications</div>
<div class="t" style="left:138.7px;transform-origin:0 0;top:5.03px;font-size:13.996500000000001px;line-height:15.63px;color:#363636;transform:scaleX(1.0095238095238095);">5488-0CF6 - Thunar</div>
<div class="a" style="left:400px;top:192px;width:648px;height:512px;background:#f6f5f4;border-radius:6px 6px 0 0;box-shadow:0 0 0 1px rgba(40,30,30,0.35),0 1px 2px rgba(0,0,0,0.3);"></div>
<div class="a" style="left:400px;top:192px;width:648px;height:28px;background:#dcd8d5;border-radius:6px 6px 0 0;"></div>
<div class="t" style="left:623.5px;transform-origin:0 0;top:199.33px;font-size:13.996500000000001px;line-height:15.63px;color:#2e3436;font-weight:bold;transform:scaleX(1.0142857142857142);">5488-0CF6 - Thunar</div>
<div class="t" style="left:411.5px;transform-origin:0 0;top:225.13px;font-size:13.996500000000001px;line-height:15.63px;color:#2e3436;transform:scaleX(1.0476190476190477);">File</div>
<div class="t" style="left:450.8px;transform-origin:0 0;top:225.13px;font-size:13.996500000000001px;line-height:15.63px;color:#2e3436;transform:scaleX(1.0476190476190477);">Edit</div>
<div class="t" style="left:491.1px;transform-origin:0 0;top:225.13px;font-size:13.996500000000001px;line-height:15.63px;color:#2e3436;transform:scaleX(1.0476190476190477);">View</div>
<div class="t" style="left:539.6px;transform-origin:0 0;top:225.13px;font-size:13.996500000000001px;line-height:15.63px;color:#2e3436;transform:scaleX(1.0476190476190477);">Go</div>
<div class="t" style="left:573.9px;transform-origin:0 0;top:225.13px;font-size:13.996500000000001px;line-height:15.63px;color:#2e3436;transform:scaleX(1.0476190476190477);">Bookmarks</div>
<div class="t" style="left:663.7px;transform-origin:0 0;top:225.13px;font-size:13.996500000000001px;line-height:15.63px;color:#2e3436;transform:scaleX(1.0476190476190477);">Help</div>
<div class="a" style="left:404px;top:244px;width:640px;height:1px;background:#d6d1cd;"></div>
<div class="a" style="left:556px;top:249px;width:446px;height:33px;background:#fff;border:1px solid #cdc7c2;border-radius:5px;"></div>
<div class="t" style="left:586.1px;transform-origin:0 0;top:259.13px;font-size:13.996500000000001px;line-height:15.63px;color:#2e3436;transform:scaleX(1.0380952380952382);">/media/linaro/5488-0CF6/</div>
<div class="a" style="left:404px;top:287px;width:640px;height:1px;background:#d6d1cd;"></div>
<div class="a" style="left:404px;top:288px;width:170px;height:412px;background:#fff;"></div>
<div class="a" style="left:574px;top:288px;width:1px;height:416px;background:#d6d1cd;"></div>
<div class="a" style="left:575px;top:288px;width:469px;height:386px;background:#fff;"></div>
<div class="a" style="left:575px;top:674px;width:469px;height:1px;background:#d6d1cd;"></div>
<div class="t" style="left:411.5px;transform-origin:0 0;top:293.93px;font-size:13.996500000000001px;line-height:15.63px;color:#000;font-weight:bold;transform:scaleX(1.1095238095238096);">Places</div>
<div class="t" style="left:447.6px;transform-origin:0 0;top:320.33px;font-size:13.996500000000001px;line-height:15.63px;color:#2e3436;transform:scaleX(1.0476190476190477);">Computer</div>
<div class="t" style="left:447.6px;transform-origin:0 0;top:345.93px;font-size:13.996500000000001px;line-height:15.63px;color:#2e3436;transform:scaleX(1.0476190476190477);">linaro</div>
<div class="t" style="left:447.6px;transform-origin:0 0;top:372.03px;font-size:13.996500000000001px;line-height:15.63px;color:#2e3436;transform:scaleX(1.0476190476190477);">Desktop</div>
<div class="t" style="left:447.6px;transform-origin:0 0;top:397.83px;font-size:13.996500000000001px;line-height:15.63px;color:#2e3436;transform:scaleX(0.9619047619047618);">Trash</div>
<div class="t" style="left:411.8px;transform-origin:0 0;top:425.03px;font-size:13.996500000000001px;line-height:15.63px;color:#000;font-weight:bold;transform:scaleX(1.1428571428571428);">Devices</div>
<div class="t" style="left:447.4px;transform-origin:0 0;top:450.93px;font-size:13.996500000000001px;line-height:15.63px;color:#2e3436;transform:scaleX(1.0476190476190477);">File System</div>
<div class="a" style="left:404px;top:472px;width:170px;height:26px;background:#3584e4;"></div>
<div class="t" style="left:447.4px;transform-origin:0 0;top:476.93px;font-size:13.996500000000001px;line-height:15.63px;color:#fff;transform:scaleX(1.0257142857142856);">62 GB Volume</div>
<svg class="a" style="left:0;top:0" width="1542" height="770" viewBox="0 0 1542 770"><g><path d="M5.6,8.4 L14.4,17.6 M14.4,8.4 L5.6,17.6" stroke="#1a9bd7" stroke-width="4" stroke-linecap="square"/><path d="M5.8,11.2 Q8,10.2 10.6,11 L12.2,9.4 L13.6,10.8 L15.6,11.5 L14.4,13.2 Q12.8,15.2 9,15 L6.6,14.9 Z" fill="#050505"/></g><g fill="#6b6b6b"><rect x="104" y="8" width="4" height="1"/><rect x="104" y="12" width="4" height="1"/><rect x="104" y="16" width="4" height="1"/></g><g transform="translate(114,5) scale(1.0000)"><defs><linearGradient id="fsp" x1="0" y1="0" x2="0.3" y2="1"><stop offset="0" stop-color="#a4d0f2"/><stop offset="1" stop-color="#b8e2f0"/></linearGradient></defs><path d="M0,1.4 Q0,0 1.4,0 H5.6 Q6.1,0 6.5,0.5 L7.3,1.6 H14.6 Q16,1.6 16,3 V14.7 Q16,16 14.7,16 H1.3 Q0,16 0,14.7 Z" fill="#3180e2"/><path d="M0.9,5.9 H5.7 L7.3,4.3 H15.1 V15.1 H0.9 Z" fill="url(#fsp)"/></g><g transform="translate(404,195) scale(1.3750)"><defs><linearGradient id="fst" x1="0" y1="0" x2="0.3" y2="1"><stop offset="0" stop-color="#a6ccef"/><stop offset="1" stop-color="#bfe3ee"/></linearGradient></defs><path d="M0,1.4 Q0,0 1.4,0 H5.6 Q6.1,0 6.5,0.5 L7.3,1.6 H14.6 Q16,1.6 16,3 V14.7 Q16,16 14.7,16 H1.3 Q0,16 0,14.7 Z" fill="#3180e2"/><path d="M0.9,5.9 H5.7 L7.3,4.3 H15.1 V15.1 H0.9 Z" fill="url(#fst)"/></g><g transform="translate(565,258) scale(1.0000)"><defs><linearGradient id="fsl" x1="0" y1="0" x2="0.3" y2="1"><stop offset="0" stop-color="#a6ccef"/><stop offset="1" stop-color="#bfe3ee"/></linearGradient></defs><path d="M0,1.4 Q0,0 1.4,0 H5.6 Q6.1,0 6.5,0.5 L7.3,1.6 H14.6 Q16,1.6 16,3 V14.7 Q16,16 14.7,16 H1.3 Q0,16 0,14.7 Z" fill="#3180e2"/><path d="M0.9,5.9 H5.7 L7.3,4.3 H15.1 V15.1 H0.9 Z" fill="url(#fsl)"/></g><g stroke="#2e3436" stroke-width="2" fill="none"><path d="M960.6,210 L964.5,205.6 L968.4,210" stroke-width="2.5"/><path d="M983,210 H992" stroke-width="2.2"/><rect x="1006.8" y="203" width="7.4" height="7.2"/><path d="M1029.6,202.6 L1037.6,210.6 M1037.6,202.6 L1029.6,210.6" stroke-width="2.5"/></g><g fill="none" stroke-linecap="round" stroke-linejoin="round"><path d="M431,257.2 L421.2,266 L431,274.8" stroke="#8c8f90" stroke-width="2.7"/><path d="M458,257.2 L467.8,266 L458,274.8" stroke="#8c8f90" stroke-width="2.7"/><path d="M490.6,270.6 L500,261.3 L509.4,270.6" stroke="#2e3436" stroke-width="2.7"/><path d="M526,264.4 L537,256.8 L548,264.4" stroke="#2e3436" stroke-width="2.7"/><path d="M528,262.6 V271.3 Q528,274.7 531.4,274.7 H542.6 Q546,274.7 546,271.3 V262.6" stroke="#2e3436" stroke-width="2.7"/></g><rect x="534.3" y="266.6" width="3.8" height="9" rx="1.9" fill="#2e3436"/><g fill="none" stroke="#2e3436" stroke-width="2.8" stroke-linecap="round"><circle cx="1019.5" cy="263.5" r="7.9"/><path d="M1025.5,269.5 L1032.3,276.3"/></g><rect x="421.5" y="317.5" width="21" height="17" rx="2" fill="#1e68d9" stroke="#2d3a55" stroke-width="1"/><rect x="427" y="334.5" width="10" height="4.2" fill="#505050"/><rect x="430" y="334.5" width="4.2" height="1.8" rx="0.9" fill="#fff"/><g><path d="M422.5,353.5 L431.5,345 L440.8,353.5" fill="none" stroke="#8a8a8a" stroke-width="3.2" stroke-linecap="round" stroke-linejoin="round"/><path d="M422.5,353.5 L431.5,345 L440.8,353.5" fill="none" stroke="#f2f2f2" stroke-width="1.6" stroke-linecap="round" stroke-linejoin="round"/><path d="M424,354 V363 H439.5 V354 L431.6,347.5 Z" fill="#f4f4f4" stroke="#8a8a8a" stroke-width="1"/><path d="M426.5,362.5 V356.5 H436.5 V362.5 M429.5,362.5 V358.5 H433.5 V362.5" fill="none" stroke="#8a8a8a" stroke-width="1"/></g><g transform="translate(421,369) scale(1.3750)"><defs><linearGradient id="fsd" x1="0" y1="0" x2="0.3" y2="1"><stop offset="0" stop-color="#a9c6ef"/><stop offset="1" stop-color="#b6d8ee"/></linearGradient></defs><path d="M0,1.4 Q0,0 1.4,0 H5.6 Q6.1,0 6.5,0.5 L7.3,1.6 H14.6 Q16,1.6 16,3 V14.7 Q16,16 14.7,16 H1.3 Q0,16 0,14.7 Z" fill="#3180e2"/><path d="M0.9,5.9 H5.7 L7.3,4.3 H15.1 V15.1 H0.9 Z" fill="url(#fsd)"/></g><g fill="none" stroke="#3b7ae6" stroke-width="1.1"><path d="M430.3,380.9 H431.8 Q434,380.9 434,383.5 Q434,386.1 431.8,386.1 H430.3 Z"/></g><g fill="#3b7ae6"><rect x="425.8" y="379.2" width="1.6" height="1.6"/><rect x="436.4" y="379.2" width="1.6" height="1.6"/><rect x="425.8" y="385.6" width="1.6" height="1.6"/><rect x="436.4" y="385.6" width="1.6" height="1.6"/></g><g transform="translate(422,395) scale(0.5556,0.5317)"><rect x="0" y="0" width="36" height="16" rx="2.5" fill="#ebe9e6" stroke="#9a9692" stroke-width="1.2"/><rect x="3.2" y="3.3000000000000003" width="29.6" height="7.999999999999999" rx="1.2" fill="#9a9896"/><path d="M0.6,15.5 H35.4 V38 Q35.4,41 32.4,41 H3.6 Q0.6,41 0.6,38 Z" fill="#37c07b"/><g fill="#fff"><path d="M19.67,23.66 A5.4,5.4 0 0 1 23.37,29.36" fill="none" stroke="#fff" stroke-width="3.3"/><path d="M22.94,33.47 L26.82,29.73 L19.92,29.00 Z"/><path d="M21.61,32.81 A5.4,5.4 0 0 1 14.83,33.17" fill="none" stroke="#fff" stroke-width="3.3"/><path d="M11.49,30.74 L12.79,35.97 L16.86,30.37 Z"/><path d="M12.72,29.92 A5.4,5.4 0 0 1 15.80,23.87" fill="none" stroke="#fff" stroke-width="3.3"/><path d="M19.57,22.19 L14.39,20.70 L17.21,27.03 Z"/></g></g><g transform="translate(423.3,448.2) scale(0.5029,0.4909)"><defs><linearGradient id="dg" x1="0" y1="0" x2="0" y2="1"><stop offset="0" stop-color="#f7f6f5"/><stop offset="1" stop-color="#e6e4e1"/></linearGradient><radialGradient id="dd" cx="0.45" cy="0.35" r="0.7"><stop offset="0" stop-color="#f1f0ee"/><stop offset="1" stop-color="#d9d7d4"/></radialGradient></defs><path d="M0,36 H35 V41 Q35,44 32,44 H3 Q0,44 0,41 Z" fill="#241f2e"/><rect x="0" y="0" width="35" height="39" rx="3" fill="url(#dg)" stroke="#d8d5d2" stroke-width="0.6"/><circle cx="17.3" cy="23.5" r="15" fill="url(#dd)"/><circle cx="17.3" cy="23.5" r="1.5" fill="#f8f8f8"/><g fill="#555"><circle cx="3.2" cy="3.2" r="0.9"/><circle cx="31.8" cy="3.2" r="0.9"/><circle cx="3.2" cy="35.6" r="0.9"/><circle cx="31.8" cy="35.6" r="0.9"/></g></g><g transform="translate(421,474) scale(0.5000,0.4864)"><path d="M0,3 Q0,0 3,0 H41 Q44,0 44,3 V31 H0 Z" fill="#fca245"/><path d="M0,31 H44 V41 Q44,44 41,44 H3 Q0,44 0,41 Z" fill="#eeecea"/><rect x="4.5" y="38" width="35" height="2" fill="#4a4550"/></g><g fill="#fff"><path d="M564,478 L570.2,485.8 H557.8 Z"/><rect x="557.8" y="487.8" width="12.4" height="3.3"/></g><g transform="translate(624,302) scale(1.0000,1.0000)"><defs><linearGradient id="fbg00" x1="0" y1="0" x2="1" y2="0"><stop offset="0" stop-color="#3a7ddf"/><stop offset="1" stop-color="#4e8fe3"/></linearGradient><linearGradient id="ffg00" x1="0" y1="0" x2="1" y2="1"><stop offset="0" stop-color="#94b8ee"/><stop offset="1" stop-color="#b8dfe6"/></linearGradient></defs><path d="M0,3 Q0,0 3,0 H17 Q18.5,0 19.5,1.2 L21.5,3.4 Q22.2,4 23.5,4 H49 Q52,4 52,7 V30 H0 Z" fill="url(#fbg00)"/><path d="M0,16.5 Q0,14.5 2,14.5 H20 Q21.5,14.5 22.5,13.5 L24.5,11 Q25.5,10 27,10 H49.5 Q52,10 52,12.5 V49 Q52,52 49,52 H0 Z" fill="url(#ffg00)"/></g><g transform="translate(768,302) scale(1.0000,1.0000)"><defs><linearGradient id="fbg01" x1="0" y1="0" x2="1" y2="0"><stop offset="0" stop-color="#3a7ddf"/><stop offset="1" stop-color="#4e8fe3"/></linearGradient><linearGradient id="ffg01" x1="0" y1="0" x2="1" y2="1"><stop offset="0" stop-color="#94b8ee"/><stop offset="1" stop-color="#b8dfe6"/></linearGradient></defs><path d="M0,3 Q0,0 3,0 H17 Q18.5,0 19.5,1.2 L21.5,3.4 Q22.2,4 23.5,4 H49 Q52,4 52,7 V30 H0 Z" fill="url(#fbg01)"/><path d="M0,16.5 Q0,14.5 2,14.5 H20 Q21.5,14.5 22.5,13.5 L24.5,11 Q25.5,10 27,10 H49.5 Q52,10 52,12.5 V49 Q52,52 49,52 H0 Z" fill="url(#ffg01)"/></g><g transform="translate(912,302) scale(1.0000,1.0000)"><defs><linearGradient id="fbg02" x1="0" y1="0" x2="1" y2="0"><stop offset="0" stop-color="#3a7ddf"/><stop offset="1" stop-color="#4e8fe3"/></linearGradient><linearGradient id="ffg02" x1="0" y1="0" x2="1" y2="1"><stop offset="0" stop-color="#94b8ee"/><stop offset="1" stop-color="#b8dfe6"/></linearGradient></defs><path d="M0,3 Q0,0 3,0 H17 Q18.5,0 19.5,1.2 L21.5,3.4 Q22.2,4 23.5,4 H49 Q52,4 52,7 V30 H0 Z" fill="url(#fbg02)"/><path d="M0,16.5 Q0,14.5 2,14.5 H20 Q21.5,14.5 22.5,13.5 L24.5,11 Q25.5,10 27,10 H49.5 Q52,10 52,12.5 V49 Q52,52 49,52 H0 Z" fill="url(#ffg02)"/></g><g transform="translate(624,397) scale(1.0000,1.0000)"><defs><linearGradient id="fbg10" x1="0" y1="0" x2="1" y2="0"><stop offset="0" stop-color="#3a7ddf"/><stop offset="1" stop-color="#4e8fe3"/></linearGradient><linearGradient id="ffg10" x1="0" y1="0" x2="1" y2="1"><stop offset="0" stop-color="#94b8ee"/><stop offset="1" stop-color="#b8dfe6"/></linearGradient></defs><path d="M0,3 Q0,0 3,0 H17 Q18.5,0 19.5,1.2 L21.5,3.4 Q22.2,4 23.5,4 H49 Q52,4 52,7 V30 H0 Z" fill="url(#fbg10)"/><path d="M0,16.5 Q0,14.5 2,14.5 H20 Q21.5,14.5 22.5,13.5 L24.5,11 Q25.5,10 27,10 H49.5 Q52,10 52,12.5 V49 Q52,52 49,52 H0 Z" fill="url(#ffg10)"/></g><g transform="translate(768,397) scale(1.0000,1.0000)"><defs><linearGradient id="fbg11" x1="0" y1="0" x2="1" y2="0"><stop offset="0" stop-color="#3a7ddf"/><stop offset="1" stop-color="#4e8fe3"/></linearGradient><linearGradient id="ffg11" x1="0" y1="0" x2="1" y2="1"><stop offset="0" stop-color="#94b8ee"/><stop offset="1" stop-color="#b8dfe6"/></linearGradient></defs><path d="M0,3 Q0,0 3,0 H17 Q18.5,0 19.5,1.2 L21.5,3.4 Q22.2,4 23.5,4 H49 Q52,4 52,7 V30 H0 Z" fill="url(#fbg11)"/><path d="M0,16.5 Q0,14.5 2,14.5 H20 Q21.5,14.5 22.5,13.5 L24.5,11 Q25.5,10 27,10 H49.5 Q52,10 52,12.5 V49 Q52,52 49,52 H0 Z" fill="url(#ffg11)"/></g><g transform="translate(912,397) scale(1.0000,1.0000)"><defs><linearGradient id="fbg12" x1="0" y1="0" x2="1" y2="0"><stop offset="0" stop-color="#3a7ddf"/><stop offset="1" stop-color="#4e8fe3"/></linearGradient><linearGradient id="ffg12" x1="0" y1="0" x2="1" y2="1"><stop offset="0" stop-color="#94b8ee"/><stop offset="1" stop-color="#b8dfe6"/></linearGradient></defs><path d="M0,3 Q0,0 3,0 H17 Q18.5,0 19.5,1.2 L21.5,3.4 Q22.2,4 23.5,4 H49 Q52,4 52,7 V30 H0 Z" fill="url(#fbg12)"/><path d="M0,16.5 Q0,14.5 2,14.5 H20 Q21.5,14.5 22.5,13.5 L24.5,11 Q25.5,10 27,10 H49.5 Q52,10 52,12.5 V49 Q52,52 49,52 H0 Z" fill="url(#ffg12)"/></g><g transform="translate(624,492) scale(1.0000,1.0000)"><defs><linearGradient id="fbg20" x1="0" y1="0" x2="1" y2="0"><stop offset="0" stop-color="#3a7ddf"/><stop offset="1" stop-color="#4e8fe3"/></linearGradient><linearGradient id="ffg20" x1="0" y1="0" x2="1" y2="1"><stop offset="0" stop-color="#94b8ee"/><stop offset="1" stop-color="#b8dfe6"/></linearGradient></defs><path d="M0,3 Q0,0 3,0 H17 Q18.5,0 19.5,1.2 L21.5,3.4 Q22.2,4 23.5,4 H49 Q52,4 52,7 V30 H0 Z" fill="url(#fbg20)"/><path d="M0,16.5 Q0,14.5 2,14.5 H20 Q21.5,14.5 22.5,13.5 L24.5,11 Q25.5,10 27,10 H49.5 Q52,10 52,12.5 V49 Q52,52 49,52 H0 Z" fill="url(#ffg20)"/></g><g transform="translate(768,492) scale(1.0000,1.0000)"><defs><linearGradient id="fbg21" x1="0" y1="0" x2="1" y2="0"><stop offset="0" stop-color="#3a7ddf"/><stop offset="1" stop-color="#4e8fe3"/></linearGradient><linearGradient id="ffg21" x1="0" y1="0" x2="1" y2="1"><stop offset="0" stop-color="#94b8ee"/><stop offset="1" stop-color="#b8dfe6"/></linearGradient></defs><path d="M0,3 Q0,0 3,0 H17 Q18.5,0 19.5,1.2 L21.5,3.4 Q22.2,4 23.5,4 H49 Q52,4 52,7 V30 H0 Z" fill="url(#fbg21)"/><path d="M0,16.5 Q0,14.5 2,14.5 H20 Q21.5,14.5 22.5,13.5 L24.5,11 Q25.5,10 27,10 H49.5 Q52,10 52,12.5 V49 Q52,52 49,52 H0 Z" fill="url(#ffg21)"/></g><g transform="translate(912,492) scale(1.0000,1.0000)"><defs><linearGradient id="fbg22" x1="0" y1="0" x2="1" y2="0"><stop offset="0" stop-color="#3a7ddf"/><stop offset="1" stop-color="#4e8fe3"/></linearGradient><linearGradient id="ffg22" x1="0" y1="0" x2="1" y2="1"><stop offset="0" stop-color="#94b8ee"/><stop offset="1" stop-color="#b8dfe6"/></linearGradient></defs><path d="M0,3 Q0,0 3,0 H17 Q18.5,0 19.5,1.2 L21.5,3.4 Q22.2,4 23.5,4 H49 Q52,4 52,7 V30 H0 Z" fill="url(#fbg22)"/><path d="M0,16.5 Q0,14.5 2,14.5 H20 Q21.5,14.5 22.5,13.5 L24.5,11 Q25.5,10 27,10 H49.5 Q52,10 52,12.5 V49 Q52,52 49,52 H0 Z" fill="url(#ffg22)"/></g><g transform="translate(624,587) scale(1.0000,1.0000)"><defs><linearGradient id="fbg30" x1="0" y1="0" x2="1" y2="0"><stop offset="0" stop-color="#3a7ddf"/><stop offset="1" stop-color="#4e8fe3"/></linearGradient><linearGradient id="ffg30" x1="0" y1="0" x2="1" y2="1"><stop offset="0" stop-color="#94b8ee"/><stop offset="1" stop-color="#b8dfe6"/></linearGradient></defs><path d="M0,3 Q0,0 3,0 H17 Q18.5,0 19.5,1.2 L21.5,3.4 Q22.2,4 23.5,4 H49 Q52,4 52,7 V30 H0 Z" fill="url(#fbg30)"/><path d="M0,16.5 Q0,14.5 2,14.5 H20 Q21.5,14.5 22.5,13.5 L24.5,11 Q25.5,10 27,10 H49.5 Q52,10 52,12.5 V49 Q52,52 49,52 H0 Z" fill="url(#ffg30)"/></g><g transform="translate(768,587) scale(1.0000,1.0000)"><defs><linearGradient id="fbg31" x1="0" y1="0" x2="1" y2="0"><stop offset="0" stop-color="#3a7ddf"/><stop offset="1" stop-color="#4e8fe3"/></linearGradient><linearGradient id="ffg31" x1="0" y1="0" x2="1" y2="1"><stop offset="0" stop-color="#94b8ee"/><stop offset="1" stop-color="#b8dfe6"/></linearGradient></defs><path d="M0,3 Q0,0 3,0 H17 Q18.5,0 19.5,1.2 L21.5,3.4 Q22.2,4 23.5,4 H49 Q52,4 52,7 V30 H0 Z" fill="url(#fbg31)"/><path d="M0,16.5 Q0,14.5 2,14.5 H20 Q21.5,14.5 22.5,13.5 L24.5,11 Q25.5,10 27,10 H49.5 Q52,10 52,12.5 V49 Q52,52 49,52 H0 Z" fill="url(#ffg31)"/></g><g transform="translate(912,587) scale(1.0000,1.0000)"><defs><linearGradient id="fbg32" x1="0" y1="0" x2="1" y2="0"><stop offset="0" stop-color="#3a7ddf"/><stop offset="1" stop-color="#4e8fe3"/></linearGradient><linearGradient id="ffg32" x1="0" y1="0" x2="1" y2="1"><stop offset="0" stop-color="#94b8ee"/><stop offset="1" stop-color="#b8dfe6"/></linearGradient></defs><path d="M0,3 Q0,0 3,0 H17 Q18.5,0 19.5,1.2 L21.5,3.4 Q22.2,4 23.5,4 H49 Q52,4 52,7 V30 H0 Z" fill="url(#fbg32)"/><path d="M0,16.5 Q0,14.5 2,14.5 H20 Q21.5,14.5 22.5,13.5 L24.5,11 Q25.5,10 27,10 H49.5 Q52,10 52,12.5 V49 Q52,52 49,52 H0 Z" fill="url(#ffg32)"/></g><g transform="translate(61,61) scale(1.0000,1.0000)"><rect x="0" y="0" width="36" height="16" rx="2.5" fill="#ebe9e6" stroke="#cfcac6" stroke-width="0.6"/><rect x="1.5" y="1.6" width="33.0" height="9.7" rx="1.2" fill="#9a9896"/><path d="M0.6,15.5 H35.4 V38 Q35.4,41 32.4,41 H3.6 Q0.6,41 0.6,38 Z" fill="#37c07b"/><g fill="#fff"><path d="M19.67,23.66 A5.4,5.4 0 0 1 23.37,29.36" fill="none" stroke="#fff" stroke-width="3.3"/><path d="M22.94,33.47 L26.82,29.73 L19.92,29.00 Z"/><path d="M21.61,32.81 A5.4,5.4 0 0 1 14.83,33.17" fill="none" stroke="#fff" stroke-width="3.3"/><path d="M11.49,30.74 L12.79,35.97 L16.86,30.37 Z"/><path d="M12.72,29.92 A5.4,5.4 0 0 1 15.80,23.87" fill="none" stroke="#fff" stroke-width="3.3"/><path d="M19.57,22.19 L14.39,20.70 L17.21,27.03 Z"/></g></g><g transform="translate(61,164) scale(1.0000,0.9886)"><defs><linearGradient id="dg" x1="0" y1="0" x2="0" y2="1"><stop offset="0" stop-color="#f7f6f5"/><stop offset="1" stop-color="#e6e4e1"/></linearGradient><radialGradient id="dd" cx="0.45" cy="0.35" r="0.7"><stop offset="0" stop-color="#f1f0ee"/><stop offset="1" stop-color="#d9d7d4"/></radialGradient></defs><path d="M0,36 H35 V41 Q35,44 32,44 H3 Q0,44 0,41 Z" fill="#241f2e"/><rect x="0" y="0" width="35" height="39" rx="3" fill="url(#dg)" stroke="#d8d5d2" stroke-width="0.6"/><circle cx="17.3" cy="23.5" r="15" fill="url(#dd)"/><circle cx="17.3" cy="23.5" r="1.5" fill="#f8f8f8"/><g fill="#555"><circle cx="3.2" cy="3.2" r="0.9"/><circle cx="31.8" cy="3.2" r="0.9"/><circle cx="3.2" cy="35.6" r="0.9"/><circle cx="31.8" cy="35.6" r="0.9"/></g></g><g transform="translate(56,268) scale(0.8462,0.8462)"><defs><linearGradient id="fbh" x1="0" y1="0" x2="1" y2="0"><stop offset="0" stop-color="#3a7ddf"/><stop offset="1" stop-color="#4c8ce4"/></linearGradient><linearGradient id="ffh" x1="0" y1="0" x2="1" y2="1"><stop offset="0" stop-color="#a3c3f0"/><stop offset="1" stop-color="#c2ddf1"/></linearGradient></defs><path d="M0,3 Q0,0 3,0 H17 Q18.5,0 19.5,1.2 L21.5,3.4 Q22.2,4 23.5,4 H49 Q52,4 52,7 V30 H0 Z" fill="url(#fbh)"/><path d="M0,16.5 Q0,14.5 2,14.5 H20 Q21.5,14.5 22.5,13.5 L24.5,11 Q25.5,10 27,10 H49.5 Q52,10 52,12.5 V49 Q52,52 49,52 H0 Z" fill="url(#ffh)"/></g><g fill="none" stroke="#4a8ae8" stroke-width="1.8" stroke-linejoin="round"><path d="M71,294 L78,288.5 L85,294"/><path d="M73,292.5 V300.8 H83 V292.5"/></g><rect x="76.8" y="295.5" width="2.5" height="5.5" fill="#4a8ae8"/><g transform="translate(56,372) scale(1.0000,1.0000)"><path d="M0,3 Q0,0 3,0 H41 Q44,0 44,3 V31 H0 Z" fill="#fca245"/><path d="M0,31 H44 V41 Q44,44 41,44 H3 Q0,44 0,41 Z" fill="#eeecea"/><rect x="4.5" y="38" width="35" height="2" fill="#4a4550"/></g></svg>
<div class="t" style="left:450px;width:400px;text-align:center;transform-origin:50% 0;top:363.83px;font-size:13.996500000000001px;line-height:15.63px;color:#000;transform:scaleX(1.0476190476190477);">3588-gms</div>
<div class="t" style="left:594px;width:400px;text-align:center;transform-origin:50% 0;top:363.83px;font-size:13.996500000000001px;line-height:15.63px;color:#000;transform:scaleX(1.0476190476190477);">adb</div>
<div class="t" style="left:738px;width:400px;text-align:center;transform-origin:50% 0;top:363.83px;font-size:13.996500000000001px;line-height:15.63px;color:#000;transform:scaleX(1.0476190476190477);">Alarms</div>
<div class="t" style="left:450px;width:400px;text-align:center;transform-origin:50% 0;top:458.83px;font-size:13.996500000000001px;line-height:15.63px;color:#000;transform:scaleX(1.0476190476190477);">Android</div>
<div class="t" style="left:594px;width:400px;text-align:center;transform-origin:50% 0;top:458.83px;font-size:13.996500000000001px;line-height:15.63px;color:#000;transform:scaleX(1.0476190476190477);">Audiobooks</div>
<div class="t" style="left:738px;width:400px;text-align:center;transform-origin:50% 0;top:458.83px;font-size:13.996500000000001px;line-height:15.63px;color:#000;transform:scaleX(0.9857142857142855);">DCIM</div>
<div class="t" style="left:450px;width:400px;text-align:center;transform-origin:50% 0;top:553.83px;font-size:13.996500000000001px;line-height:15.63px;color:#000;transform:scaleX(1.0476190476190477);">debian12</div>
<div class="t" style="left:594px;width:400px;text-align:center;transform-origin:50% 0;top:553.83px;font-size:13.996500000000001px;line-height:15.63px;color:#000;transform:scaleX(1.0476190476190477);">Documents</div>
<div class="t" style="left:738px;width:400px;text-align:center;transform-origin:50% 0;top:553.83px;font-size:13.996500000000001px;line-height:15.63px;color:#000;transform:scaleX(1.0476190476190477);">Download</div>
<div class="t" style="left:450px;width:400px;text-align:center;transform-origin:50% 0;top:648.83px;font-size:13.996500000000001px;line-height:15.63px;color:#000;transform:scaleX(1.0476190476190477);">DriverAssitant_v5.1</div>
<div class="t" style="left:594px;width:400px;text-align:center;transform-origin:50% 0;top:648.83px;font-size:13.996500000000001px;line-height:15.63px;color:#000;transform:scaleX(1.0476190476190477);">em3588s</div>
<div class="t" style="left:738px;width:400px;text-align:center;transform-origin:50% 0;top:648.83px;font-size:13.996500000000001px;line-height:15.63px;color:#000;transform:scaleX(1.0476190476190477);">idea527</div>
<div class="a" style="left:575px;top:660px;width:469px;height:14px;overflow:hidden;"><div class="t" style="left:-125px;width:400px;text-align:center;transform-origin:50% 0;top:5.83px;font-size:13.996500000000001px;line-height:15.63px;color:#000;transform:scaleX(1.0476190476190477);">3</div>
</div>
<div class="t" style="left:588.6px;transform-origin:0 0;top:680.03px;font-size:13.996500000000001px;line-height:15.63px;color:#2e3436;transform:scaleX(1.0666666666666667);">28 folders</div>
<div class="t" style="left:661.5px;transform-origin:0 0;top:680.03px;font-size:13.996500000000001px;line-height:15.63px;color:#2e3436;transform:scaleX(1.0476190476190477);">|</div>
<div class="t" style="left:674.0px;transform-origin:0 0;top:680.03px;font-size:13.996500000000001px;line-height:15.63px;color:#2e3436;transform:scaleX(1.0476190476190477);">18 files: 275.8 MiB (289243065 bytes)</div>
<div class="t" style="left:928.0px;transform-origin:0 0;top:680.03px;font-size:13.996500000000001px;line-height:15.63px;color:#2e3436;transform:scaleX(1.0476190476190477);">|</div>
<div class="t" style="left:940.0px;transform-origin:0 0;top:680.03px;font-size:13.996500000000001px;line-height:15.63px;color:#2e3436;transform:scaleX(1.0304761904761905);">Free space:...</div>
<div class="t" style="left:-122px;width:400px;text-align:center;transform-origin:50% 0;top:112.93px;font-size:13.996500000000001px;line-height:15.63px;color:#fff;transform:scaleX(0.9904761904761905);text-shadow:1px 1px 2px rgba(0,0,0,.6);">Trash</div>
<div class="t" style="left:-122px;width:400px;text-align:center;transform-origin:50% 0;top:217.13px;font-size:13.996500000000001px;line-height:15.63px;color:#fff;transform:scaleX(1.0476190476190477);text-shadow:1px 1px 2px rgba(0,0,0,.6);">File System</div>
<div class="t" style="left:-124.0px;width:400px;text-align:center;transform-origin:50% 0;top:320.83px;font-size:13.996500000000001px;line-height:15.63px;color:#fff;transform:scaleX(1.0476190476190477);text-shadow:1px 1px 2px rgba(0,0,0,.6);">Home</div>
<div class="t" style="left:-123.5px;width:400px;text-align:center;transform-origin:50% 0;top:425.33px;font-size:13.996500000000001px;line-height:15.63px;color:#fff;text-shadow:1px 1px 2px rgba(0,0,0,.6);">62 GB</div>
<div class="t" style="left:-123.5px;width:400px;text-align:center;transform-origin:50% 0;top:442.03px;font-size:13.996500000000001px;line-height:15.63px;color:#fff;transform:scaleX(1.0476190476190477);text-shadow:1px 1px 2px rgba(0,0,0,.6);">Volume</div>
</body></html>
